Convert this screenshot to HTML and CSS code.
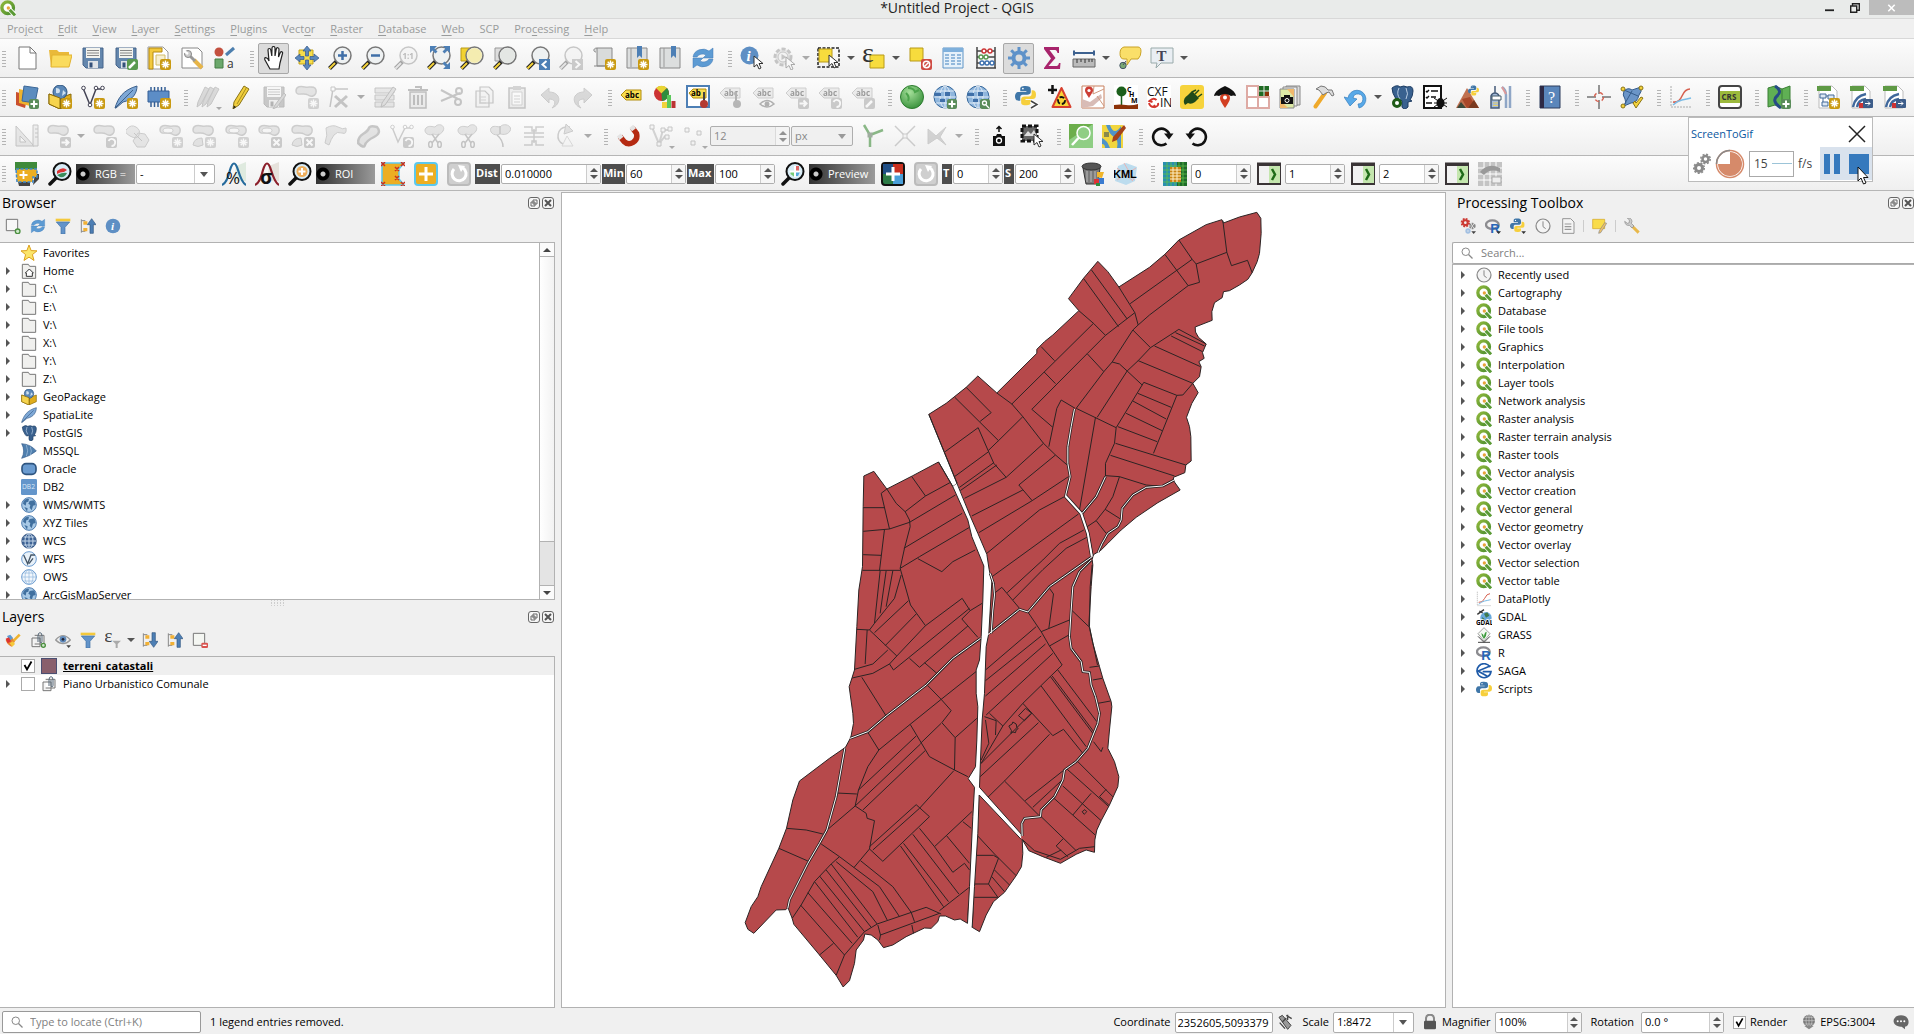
FILE: index.html
```html
<!DOCTYPE html>
<html lang="en">
<head>
<meta charset="utf-8">
<title>*Untitled Project - QGIS</title>
<link rel="stylesheet" href="styles.css">
</head>
<body>
<svg class="paints" aria-hidden="true">
<linearGradient id="qg" x1="0" y1="0" x2="1" y2="1"><stop offset="0" stop-color="#8fb73c"/><stop offset="1" stop-color="#4b8f2e"/></linearGradient>
<radialGradient id="gg" cx=".4" cy=".3" r=".8"><stop offset="0" stop-color="#a5e09a"/><stop offset="1" stop-color="#2f8a33"/></radialGradient>
</svg>
<svg class="defs" aria-hidden="true">
<defs>
<g id="bstar"><rect x="13" y="13" width="11" height="11" rx="2" fill="#c99a12"/><path d="M18.500 14.500v8M14.500 18.500h8M15.700 15.700l5.600 5.600M21.300 15.700l-5.600 5.600" stroke="#fff" stroke-width="1.400"/></g>
<g id="bplus"><rect x="14" y="14" width="10" height="10" rx="2" fill="#5a8c5a"/><path d="M19 15.500v7M15.500 19h7" stroke="#fff" stroke-width="2"/></g>
<g id="bx"><rect x="13" y="13" width="11" height="11" rx="2" fill="#888"/><path d="M15.500 15.500l6 6M21.500 15.500l-6 6" stroke="#fff" stroke-width="2"/></g>
<g id="barr"><rect x="13" y="13" width="11" height="11" rx="2" fill="#888"/><path d="M14.500 18.500h7M18.500 15.500l3 3-3 3" stroke="#fff" stroke-width="2" fill="none"/></g>
<g id="brot"><rect x="13" y="13" width="11" height="11" rx="2" fill="#888"/><path d="M15.500 17a3.500 3.500 0 1 1 3 5" stroke="#fff" stroke-width="1.800" fill="none"/></g>
<g id="bpen"><rect x="13" y="13" width="11" height="11" rx="2" fill="#5a9a50"/><path d="M15 22l6-6" stroke="#fff" stroke-width="2.500"/></g>
<g id="mag"><path d="M10 14L1.500 22.500" stroke="#222" stroke-width="4"/><path d="M7 17L1.500 22.500" stroke="#f5d33a" stroke-width="2"/><circle cx="14.500" cy="9.500" r="8.500" fill="#eef1f2" stroke="#777" stroke-width="1.500"/></g>
<g id="cur"><path d="M0 0v11l3-2.500 2 4.500 2-1-2-4.500h4z" fill="#fff" stroke="#333"/></g>
<g id="blob"><path d="M1 6c0-5 5-5 9-4s10-2 11 3-4 8-8 5-12 2-12-4z" fill="#c4c4c4" stroke="#888" stroke-width="1.500"/></g>
<g id="sciss"><path d="M12 3c4-5 11-1 8 4s-8 4-9 3c-7 3-11-3-8-6s7-1 9-1z" fill="#c4c4c4" stroke="#888"/><path d="M9 10l6 9M16 10L9 19" stroke="#777" stroke-width="1.500"/><ellipse cx="7.500" cy="20.500" rx="1.800" ry="3" fill="none" stroke="#777" stroke-width="1.500"/><ellipse cx="16.500" cy="20.500" rx="1.800" ry="3" fill="none" stroke="#777" stroke-width="1.500"/></g>
<g id="lab"><path d="M1 8l5-5h15v10H6z" fill="#f8dd4e" stroke="#b28d0e"/><text x="5" y="11" font-size="8" font-weight="700">abc</text></g>
<g id="globeg"><circle cx="12" cy="12" r="11" fill="#8fb6dd" stroke="#35679b"/><ellipse cx="12" cy="12" rx="5" ry="11" fill="none" stroke="#dfeaf5"/><path d="M12 1v22M1 12h22M3 6h18M3 18h18" stroke="#dfeaf5" fill="none"/><path d="M2 8h6v3H2zM12 7h5v4h-5zM7 14h5v3H7z" fill="#3f6fa8"/></g>
<g id="lens"><path d="M9 15L2 22" stroke="#111" stroke-width="3.500" stroke-linecap="round"/><circle cx="14" cy="9.500" r="8.500" fill="#d8ecf6" stroke="#111" stroke-width="2"/></g>
</defs>
<symbol id="q" viewBox="0 0 24 24"><circle cx="11.500" cy="11.500" r="8.700" fill="#fff" stroke="url(#qg)" stroke-width="5"/><path d="M13 13l9 9" stroke="#fff" stroke-width="7"/><path d="M14.500 14.500l8 8.500" stroke="#5a9a35" stroke-width="4.500"/><circle cx="12.500" cy="12" r="2.500" fill="#e7a33a"/></symbol>
<symbol id="new" viewBox="0 0 24 24"><path d="M4 1h11l6 6v16H4z" fill="#fff" stroke="#777"/><path d="M15 1v6h6" fill="none" stroke="#777"/></symbol>
<symbol id="open" viewBox="0 0 24 24"><path d="M1 4h8l2 2h10v15H3z" fill="#e9b93a"/><path d="M4 9h20l-3 12H3z" fill="#fadb5e" stroke="#e2b22e"/></symbol>
<symbol id="save" viewBox="0 0 24 24"><path d="M2 2h20v20H5l-3-3z" fill="#6386ad" stroke="#47648a"/><path d="M5 2h14v10H5z" fill="#f3f3ee"/><path d="M6 4.500h12M6 7h12M6 9.500h12" stroke="#888"/><path d="M7 15h10v7H7z" fill="#dfe3e8"/><path d="M8.500 16.500h3v5h-3z" fill="#33507a"/></symbol>
<symbol id="saveas" viewBox="0 0 24 24"><use href="#save"/><use href="#bpen"/></symbol>
<symbol id="lay" viewBox="0 0 24 24"><path d="M1 1h15l5 5v17H1z" fill="#fff" stroke="#999"/><path d="M2 2h13v4H6v17H2z" fill="#f3c93c" stroke="#b58a10"/><path d="M9 9h9v10H9z" fill="#f7efcf" stroke="#d2bd6a"/><use href="#bstar"/></symbol>
<symbol id="laym" viewBox="0 0 24 24"><path d="M2 2h16l4 4v16H2z" fill="#fff" stroke="#888"/><path d="M14 14l8 8" stroke="#e7b548" stroke-width="4"/><path d="M7 7l8 8" stroke="#999" stroke-width="3"/><circle cx="8" cy="8" r="3.500" fill="#ccc" stroke="#888"/><path d="M8 8L4 5" stroke="#fff" stroke-width="2.500"/></symbol>
<symbol id="style" viewBox="0 0 24 24"><circle cx="6" cy="6" r="4.500" fill="#c3503f"/><path d="M13 9l8-7" stroke="#4d7fae" stroke-width="3"/><path d="M2 13h8v9H2z" fill="#6ca86c" stroke="#457c45"/><text x="14" y="22" font-size="12" fill="#333">a</text></symbol>
<symbol id="hand" viewBox="0 0 24 24"><path d="M8 23L3 14c-1-3 1-3 3-1l1 2L6 4c0-2 2.500-2 2.800 0l1 6L10 2c.3-2 2.700-2 3 0v8l1.300-7c.5-2 2.700-1.500 2.700.5L16.500 11l1.800-4.500c1-1.500 2.700-.5 2.200 1L18 17l-1 6z" fill="#fff" stroke="#222" stroke-width="1.200"/></symbol>
<symbol id="pan" viewBox="0 0 24 24"><path d="M4 4h14v14H4z" fill="#f6dd4a" stroke="#c2a21b"/><path d="M12 0l4 5h-2.500v5h-3V5H8zM12 24l4-5h-2.500v-5h-3v5H8zM0 12l5-4v2.500h4v3H5V16zM24 12l-5-4v2.500h-4v3h4V16z" fill="#5b88bd" stroke="#34588a" stroke-width=".7"/></symbol>
<symbol id="zin" viewBox="0 0 24 24"><use href="#mag"/><path d="M14.500 5v9M10 9.500h9" stroke="#3f6fa8" stroke-width="2.500"/></symbol>
<symbol id="zout" viewBox="0 0 24 24"><use href="#mag"/><path d="M10 9.500h9" stroke="#3f6fa8" stroke-width="2.500"/></symbol>
<symbol id="z11" viewBox="0 0 24 24"><use href="#mag"/><text x="8.500" y="12.500" font-size="8" font-weight="700" fill="#555">1:1</text></symbol>
<symbol id="zfull" viewBox="0 0 24 24"><use href="#mag"/><path d="M3 0h7L7.500 2.500l3 3-2 2-3-3L3 7zM23 0v7l-2.500-2.500-3 3-2-2 3-3L16 0zM23 23h-7l2.500-2.500-3-3 2-2 3 3L23 16z" fill="#4d7fb5"/></symbol>
<symbol id="zsel" viewBox="0 0 24 24"><path d="M1 2h13v13H1z" fill="#f2d230" stroke="#b89a18"/><use href="#mag"/><circle cx="14.500" cy="9.500" r="7.500" fill="#f4ecb0"/></symbol>
<symbol id="zlay" viewBox="0 0 24 24"><path d="M2 2h12v13H2z" fill="#ddd" stroke="#999"/><use href="#mag"/><circle cx="14.500" cy="9.500" r="7.500" fill="#e4e7e4"/></symbol>
<symbol id="zlast" viewBox="0 0 24 24"><use href="#mag"/><path d="M13 13h11v11H13z" fill="#4d7fb5"/><path d="M20.500 15l-4 3.500 4 3.500" fill="none" stroke="#fff" stroke-width="2"/></symbol>
<symbol id="znext" viewBox="0 0 24 24"><use href="#mag"/><path d="M13 13h11v11H13z" fill="#888"/><path d="M16.500 15l4 3.500-4 3.500" fill="none" stroke="#fff" stroke-width="2"/></symbol>
<symbol id="nmap" viewBox="0 0 24 24"><path d="M5 2h15v18H5zM5 2c-4 0-4 4-1 4M2 20h13" fill="#d9dbdb" stroke="#888"/><use href="#bstar"/></symbol>
<symbol id="bmn" viewBox="0 0 24 24"><path d="M2 2h20v20H2z" fill="#dcdede" stroke="#888"/><path d="M6 2v19" stroke="#999"/><path d="M12 0h5v12l-2.500-2.500L12 12z" fill="#4d7fb5"/><use href="#bstar"/></symbol>
<symbol id="bm" viewBox="0 0 24 24"><path d="M2 2h20v20H2z" fill="#dcdede" stroke="#888"/><path d="M6 2v19" stroke="#999"/><path d="M13 0h5v12l-2.500-2.500L13 12z" fill="#4d7fb5"/></symbol>
<symbol id="ref" viewBox="0 0 24 24"><path d="M2 11a10 9 0 0 1 16-6l4-3v10H12l3-3a6 5 0 0 0-9 2zM22 13a10 9 0 0 1-16 6l-4 3V12h10l-3 3a6 5 0 0 0 9-2z" fill="#5d9bd3" stroke="#4179b5" stroke-width=".5"/></symbol>
<symbol id="ident" viewBox="0 0 24 24"><circle cx="9.500" cy="9.500" r="9" fill="#5e8fc4"/><text x="6.500" y="15" font-size="15" font-style="italic" font-weight="700" font-family="Liberation Serif" fill="#fff">i</text><use href="#cur" x="14" y="10"/></symbol>
<symbol id="act" viewBox="0 0 24 24"><circle cx="11" cy="11" r="8" fill="#ccc" stroke="#777" stroke-width="3" stroke-dasharray="4 2"/><circle cx="11" cy="11" r="5" fill="#eee" stroke="#777"/><path d="M9.500 8l5 3-5 3z" fill="#777"/><use href="#cur" x="14" y="11"/></symbol>
<symbol id="sel" viewBox="0 0 24 24"><path d="M1 2h21v19H1z" fill="none" stroke="#222" stroke-width="1.500" stroke-dasharray="3 1.500"/><path d="M2 3h13v13H2z" fill="#f7dc3d" stroke="#b89a18"/><use href="#cur" x="12" y="9"/></symbol>
<symbol id="eps" viewBox="0 0 24 24"><path d="M8 9h14v13H8z" fill="#f7dc3d" stroke="#b89a18"/><text x="0" y="16" font-size="28" font-family="Liberation Serif" fill="#333">ε</text></symbol>
<symbol id="desel" viewBox="0 0 24 24"><path d="M2 2h13v13H2z" fill="#f7dc3d" stroke="#b89a18"/><rect x="13" y="13" width="11" height="11" rx="2" fill="#cf4b43"/><circle cx="18.500" cy="18.500" r="3.200" fill="none" stroke="#fff" stroke-width="1.500"/><path d="M16.500 20.500l4-4" stroke="#fff" stroke-width="1.500"/></symbol>
<symbol id="tab" viewBox="0 0 24 24"><path d="M2 2h20v20H2z" fill="#e6f1fa" stroke="#5e94c6"/><path d="M2 2h20v4H2z" fill="#7fb0dc"/><path d="M4 9h4M10 9h4M16 9h4M4 12h4M10 12h4M16 12h4M4 15h4M10 15h4M16 15h4M4 18h4M10 18h4M16 18h4" stroke="#78a7d2" stroke-width="1.500"/></symbol>
<symbol id="aba" viewBox="0 0 24 24"><path d="M3 1v21M21 1v21M2 22h20M3 5h18M3 11h18M3 17h18" stroke="#444" stroke-width="1.500"/><g fill="#fff" stroke-width="1.400"><g stroke="#c33"><circle cx="10" cy="5" r="2"/><circle cx="16" cy="5" r="2"/></g><g stroke="#5a9a50"><circle cx="7" cy="11" r="2"/><circle cx="12" cy="11" r="2"/></g><g stroke="#3f72b0"><circle cx="8" cy="17" r="2"/><circle cx="13" cy="17" r="2"/><circle cx="18" cy="17" r="2"/></g></g></symbol>
<symbol id="gear" viewBox="0 0 24 24"><circle cx="12" cy="12" r="5.500" fill="none" stroke="#5f92c9" stroke-width="4"/><path d="M12 1v5M12 18v5M1 12h5M18 12h5M4.200 4.200l3.500 3.500M16.300 16.300l3.500 3.500M19.800 4.200l-3.500 3.500M7.700 16.300l-3.500 3.500" stroke="#5f92c9" stroke-width="3"/></symbol>
<symbol id="sig" viewBox="0 0 24 24"><path d="M4 1h15v6h-1.500C17 4.500 16 4 14 4H9.500l6 8-7 8h7c2 0 3-.5 3.500-3H20.500L20 23H4v-1l7-9.500L4 3z" fill="#a8246c"/></symbol>
<symbol id="meas" viewBox="0 0 24 24"><path d="M2 7h20M2 4.500v5M22 4.500v5" stroke="#3d618f" stroke-width="2"/><path d="M1 13h22v8H1z" fill="#bbb" stroke="#666"/><path d="M5 13v4M9 13v3M13 13v4M17 13v3M20 13v3" stroke="#333"/></symbol>
<symbol id="tip" viewBox="0 0 24 24"><path d="M6 1h14q3 0 3 4.500T20 13h-7l-4 6v-6H6q-4 0-4-5.500T6 1z" fill="#fadf69" stroke="#c9a227"/><circle cx="5" cy="19.500" r="3.200" fill="#79a874" stroke="#456"/><path d="M5 19l3-4" stroke="#456"/></symbol>
<symbol id="tann" viewBox="0 0 24 24"><path d="M1 2h22v15H11l-5 5 1-5H1z" fill="#e9eef3" stroke="#9aa"/><text x="6.500" y="14.500" font-size="15" font-weight="700" font-family="Liberation Serif" fill="#445">T</text></symbol>
<symbol id="dsm" viewBox="0 0 24 24"><path d="M1 7l12 3-3 13-9-3z" fill="#c9502e"/><path d="M4 4l13 3-2 14-11-3z" fill="#efb32e"/><path d="M9 1l14 2-3 15-13-2z" fill="#5b8cbe" stroke="#3c6797"/><use href="#bplus"/></symbol>
<symbol id="gpk" viewBox="0 0 24 24"><path d="M1 9l11 4v11L1 19zM12 13l11-4v10l-11 5z" fill="#e0ad1d" stroke="#8a6a08"/><circle cx="12" cy="7" r="7" fill="#5b88b8" stroke="#2d537d"/><path d="M8 3q4 0 4 3t-4 2zM15 5l3 3-4 3z" fill="#cfe0ef"/><path d="M1 9l11 4v11L1 19z" fill="#f6d44f" stroke="#8a6a08"/></symbol>
<symbol id="gpkn" viewBox="0 0 24 24"><use href="#gpk"/><use href="#bstar"/></symbol>
<symbol id="shp" viewBox="0 0 24 24"><path d="M2 3l7 17L15 4h7" fill="none" stroke="#445" stroke-width="1.500"/><g fill="#fff" stroke="#445"><circle cx="2.500" cy="3" r="1.800"/><circle cx="15" cy="3" r="1.800"/><circle cx="21.500" cy="3" r="1.800"/><circle cx="9" cy="20" r="1.800"/></g><use href="#bstar"/></symbol>
<symbol id="fea" viewBox="0 0 24 24"><path d="M1 23C4 13 9 5 23 1c0 7-4 14-14 16L2 23z" fill="#7ea8d6" stroke="#3c608c"/><path d="M1 23L19 5" stroke="#3c608c"/></symbol>
<symbol id="fean" viewBox="0 0 24 24"><use href="#fea"/><use href="#bstar"/></symbol>
<symbol id="mem" viewBox="0 0 24 24"><path d="M4 2v20M7.500 2v20M11 2v20M14.500 2v20M18 2v20" stroke="#345f95" stroke-width="1.500"/><path d="M1 6h21v11H1z" fill="#5c8dc6" stroke="#345f95"/><use href="#bstar"/></symbol>
<symbol id="pens" viewBox="0 0 24 24"><path d="M9 2l4 2L5 19l-4 3 1-5zM14 2l4 2-8 15-4 3 1-5zM19 2l4 2-8 15-4 3 1-5z" fill="#aaa" stroke="#777"/></symbol>
<symbol id="pen" viewBox="0 0 24 24"><path d="M15 1l5 3-10 16-6 4 1-7z" fill="#f1ce3d" stroke="#8a7416"/><path d="M17.500 2.500L8 19" stroke="#a88f1e"/><path d="M4 24l1-3.500 2 1.500z" fill="#222"/></symbol>
<symbol id="sed" viewBox="0 0 24 24"><use href="#save"/><path d="M22 8l-9 12-2 4 4-2 9-12z" fill="#aaa" stroke="#666"/></symbol>
<symbol id="addp" viewBox="0 0 24 24"><use href="#blob"/><use href="#bstar"/></symbol>
<symbol id="vtx" viewBox="0 0 24 24"><path d="M3 22L6 4h15" fill="none" stroke="#777" stroke-width="1.500"/><path d="M4 2h4v4H4z" fill="#fff" stroke="#777"/><path d="M8 11l12 11M20 11L8 22" stroke="#777" stroke-width="3"/></symbol>
<symbol id="matt" viewBox="0 0 24 24"><path d="M2 3h19v5H2zM2 10h19v5H2zM2 17h19v5H2z" fill="#ccc" stroke="#777"/><path d="M20 2L9 18l-1 4 4-2L23 4z" fill="#bbb" stroke="#666"/></symbol>
<symbol id="trash" viewBox="0 0 24 24"><path d="M4 7h16v16H4z" fill="#ddd" stroke="#666" stroke-width="1.500"/><path d="M2 5h20M9 2h6v3M8 10v10M12 10v10M16 10v10" stroke="#666" stroke-width="2" fill="none"/></symbol>
<symbol id="cut" viewBox="0 0 24 24"><path d="M2 5l17 9M2 16l19-8" stroke="#777" stroke-width="2"/><circle cx="19" cy="17" r="3" fill="none" stroke="#777" stroke-width="2"/><circle cx="20" cy="6" r="3" fill="none" stroke="#777" stroke-width="2"/></symbol>
<symbol id="copy" viewBox="0 0 24 24"><path d="M8 2h9l4 4v12H8zM4 6h9l4 4v12H4z" fill="#eee" stroke="#777" stroke-width="1.200"/><path d="M7 12h7M7 15h7M7 18h7" stroke="#999"/></symbol>
<symbol id="paste" viewBox="0 0 24 24"><path d="M4 3h16v20H4z" fill="#ddd" stroke="#777" stroke-width="1.500"/><path d="M7 7h10v13H7z" fill="#fff" stroke="#999"/><path d="M8 1h8v4H8z" fill="#999"/><path d="M9 11h6M9 14h6M9 17h6" stroke="#999"/></symbol>
<symbol id="undo" viewBox="0 0 24 24"><path d="M3 10l8-7v4c12 0 13 12 3 16 5-5 3-9-3-9v4z" fill="#aaa" stroke="#888"/></symbol>
<symbol id="redo" viewBox="0 0 24 24"><path d="M21 10l-8-7v4C1 7 0 19 10 23c-5-5-3-9 3-9v4z" fill="#aaa" stroke="#888"/></symbol>
<symbol id="lab1" viewBox="0 0 24 24"><use href="#lab" y="2"/></symbol>
<symbol id="dia" viewBox="0 0 24 24"><circle cx="8.500" cy="8.500" r="7.500" fill="#c33"/><path d="M8.500 8.500L3 3A8 8 0 0 1 14 3z" fill="#e8d533"/><path d="M8.500 8.500L14 3a8 8 0 0 1-5 13z" fill="#2f8d3d"/><path d="M9 17h5v6H9z" fill="#f1d23c"/><path d="M14 10h4v13h-4z" fill="#5cc85c"/><path d="M18.500 16h4v7h-4z" fill="#b33"/></symbol>
<symbol id="labp" viewBox="0 0 24 24"><path d="M1 1h22v21H1z" fill="#fff" stroke="#4d7fb5" stroke-width="2"/><path d="M3 8l4-4h13v9H7z" fill="#f8dd4e" stroke="#b28d0e"/><text x="5" y="11" font-size="8" font-weight="700">ab</text><path d="M18 7v9" stroke="#444" stroke-width="2"/><circle cx="18" cy="19" r="4" fill="#b33a32"/></symbol>
<symbol id="lpin" viewBox="0 0 24 24"><use href="#lab"/><path d="M17 7v9" stroke="#444" stroke-width="2"/><circle cx="18" cy="19" r="4" fill="#555"/></symbol>
<symbol id="leye" viewBox="0 0 24 24"><use href="#lab"/><path d="M8 19q7-7 14 0-7 6-14 0z" fill="#fff" stroke="#444" stroke-width="1.500"/><circle cx="15" cy="19" r="2.500" fill="#444"/></symbol>
<symbol id="larr" viewBox="0 0 24 24"><use href="#lab"/><use href="#barr"/></symbol>
<symbol id="lrot" viewBox="0 0 24 24"><use href="#lab"/><use href="#brot"/></symbol>
<symbol id="lpen" viewBox="0 0 24 24"><use href="#lab"/><use href="#bpen"/></symbol>
<symbol id="gball" viewBox="0 0 24 24"><circle cx="12" cy="12" r="11.500" fill="url(#gg)" stroke="#2c7c2f"/><path d="M8 3q6 0 7 4l4-2M6 8q4 4 2 8" stroke="#4ba34b" fill="none" stroke-width="2"/></symbol>
<symbol id="gadd" viewBox="0 0 24 24"><use href="#globeg"/><use href="#bplus"/></symbol>
<symbol id="gsea" viewBox="0 0 24 24"><use href="#globeg"/><rect x="14" y="14" width="10" height="10" rx="2" fill="#5a8c5a"/><circle cx="18.500" cy="18" r="2" fill="none" stroke="#fff" stroke-width="1.300"/><path d="M20 20l3 3" stroke="#fff" stroke-width="1.300"/></symbol>
<symbol id="py" viewBox="0 0 24 24"><path d="M12 1c-5 0-6 1-6 4v2h7v1H4c-3 0-4 3-4 5s1 5 4 5h2v-4c0-2 1-3 3-3h5c2 0 4-1 4-3V5c0-3-2-4-6-4z" fill="#3f76a8"/><path d="M12 23c5 0 6-1 6-4v-2h-6v-1h8c3 0 4-2 4-5s-1-5-4-5h-1v4c0 2-1 3-3 3h-5c-2 0-4 1-4 3v3c0 3 1 4 5 4z" fill="#f6cf3c"/><circle cx="9" cy="4" r="1" fill="#fff"/></symbol>
<symbol id="pyc" viewBox="0 0 24 24"><use href="#py" width="21" height="21"/><path d="M16 16l6 3.500-6 3.500" stroke="#fff" stroke-width="4" fill="none"/><path d="M16 16l6 3.500-6 3.500" stroke="#444" stroke-width="1.500" fill="none"/></symbol>
<symbol id="warn" viewBox="0 0 24 24"><path d="M13.500 3l9 19h-18z" fill="#f9d438" stroke="#d8402e" stroke-width="2" stroke-linejoin="round"/><path d="M0 5h9M4.500 0v9" stroke="#111" stroke-width="2.500"/><circle cx="13.500" cy="15.500" r="3.500" fill="none" stroke="#111" stroke-width="1.800" stroke-dasharray="5 2"/></symbol>
<symbol id="pinm" viewBox="0 0 24 24"><path d="M1 1h22v22H1z" fill="#fff" stroke="#c9805f"/><path d="M1 14l8 3 11-8 1 4-9 8-11 2z" fill="#d8bcb6"/><path d="M13 1l-1 8 11-5M16 11l7 10" stroke="#cf9a80" fill="none"/><path d="M8 13C5 8 4 7 4 5.500a4 4 0 0 1 8 0C12 7 11 8 8 13z" fill="#cc3d35"/><circle cx="8" cy="5.500" r="1.600" fill="#fff"/></symbol>
<symbol id="chm" viewBox="0 0 24 24"><path d="M0 0h24v24H0z" fill="#fff"/><circle cx="7.500" cy="6.500" r="5" fill="#1b5f1b"/><path d="M7.500 9v12" stroke="#1b5f1b" stroke-width="1.500"/><path d="M0 20q6-1 12 0t12-1v5H0z" fill="#8c3208"/><text x="13" y="7" font-size="7" font-weight="700">C</text><text x="15" y="12" font-size="7" font-weight="700">H</text><text x="17" y="18" font-size="7" font-weight="700">M</text></symbol>
<symbol id="cxf" viewBox="0 0 24 24"><path d="M0 0h24v24H0z" fill="#fff"/><text x="0" y="11" font-size="12" fill="#111">CXF</text><text x="13" y="22" font-size="12" fill="#111">IN</text><path d="M9.500 15q-3-3-7 1l3 1M2 18q1 4 5 4M11 18q1 3-3 4l-1-2" stroke="#d4352c" stroke-width="2" fill="none"/></symbol>
<symbol id="plug" viewBox="0 0 24 24"><rect width="24" height="24" rx="3" fill="#f6d33c"/><path d="M4 18q-1-5 4-8l4-4 7 7-4 4q-4 3-7 1l-3 2z" fill="#1f4a1a"/><path d="M12 7l4-2M18 12l4-3M15 9l4-4" stroke="#1f4a1a" stroke-width="1.500"/></symbol>
<symbol id="pind" viewBox="0 0 24 24"><path d="M12 23C8 17 7 15 7 13a5 5 0 0 1 10 0c0 2-1 4-5 10z" fill="#d23f22"/><circle cx="12" cy="12.500" r="2" fill="#fff"/><path d="M1 11q1-5 7-8l4-2 4 2q6 3 7 8-3-1-5 0-6-4-12 0-2-1-5 0z" fill="#111"/></symbol>
<symbol id="grid4" viewBox="0 0 24 24"><path d="M1 1h11v11H1zM12 12h11v11H12zM1 12h11v11H1z" fill="#fff" stroke="#deaaa4" stroke-width="2"/><path d="M13 1h10v10H13z" fill="#1f6b23"/><path d="M19 6.500h4V11h-4z" fill="#8c3208"/><path d="M13 6h10M18 1v10" stroke="#e8e8e8"/></symbol>
<symbol id="maps" viewBox="0 0 24 24"><path d="M7 1h14v19H7z" fill="#ddd" stroke="#888"/><path d="M4 2h14v19H4z" fill="#eee" stroke="#888"/><path d="M1 4h14v19H1z" fill="#dce9a6" stroke="#888"/><path d="M1 15l8 8H1zM8 4l7 8V4z" fill="#f1b86b"/><path d="M2 12h12v7H2zM5 10h6v3H5z" fill="#111"/><circle cx="8" cy="15.500" r="2" fill="none" stroke="#fff"/></symbol>
<symbol id="ham" viewBox="0 0 24 24"><path d="M3.500 21.500L13 8" stroke="#efa92a" stroke-width="4" stroke-linecap="round"/><path d="M4 4l5-3q5 0 7 4l4 0 2 5-2 1-3-4-3 1-3 2-4-5z" fill="#ddd" stroke="#777"/></symbol>
<symbol id="bundo" viewBox="0 0 24 24"><path d="M0 12l4 1a9 9 0 1 1 11 10l-1-4a5 5 0 1 0-5-6l4 1-7 7z" fill="#58a9e8" stroke="#347dbd" stroke-width=".7"/></symbol>
<symbol id="ele" viewBox="0 0 24 24"><path d="M2 3q5-4 8-1 4-2 7 0 6-2 6 4 0 5-3 9l2 1-4 1v5q-4 4-6 0v-6q-1-2-1 0-3 2-5-2Q2 8 2 3z" fill="#39618f" stroke="#1d3c62"/><path d="M9 3q-3 6 1 11M16 3q3 6 0 11" stroke="#b9cde4" fill="none"/></symbol>
<symbol id="eleg" viewBox="0 0 24 24"><use href="#ele"/><circle cx="7" cy="18" r="3.500" fill="#fff" stroke="#1f5b17" stroke-width="3"/></symbol>
<symbol id="bug" viewBox="0 0 24 24"><path d="M1 1h17v22H1z" fill="#fff" stroke="#111" stroke-width="2"/><path d="M3 6l1 1 2-2M3 12l1 1 2-2M8 6h7M8 12h5M3 18h6" stroke="#111" stroke-width="1.500" fill="none"/><ellipse cx="17.500" cy="18" rx="4" ry="5" fill="#111"/><path d="M11 13l13 9M24 13l-13 9M11 18h13" stroke="#111"/></symbol>
<symbol id="mtn" viewBox="0 0 24 24"><path d="M0 23L11 3l12 20z" fill="#c0704f"/><path d="M6 14l8-2 5 8-8 3z" fill="#a9482a"/><path d="M1 23l4-6 5 6z" fill="#3c4a3a"/><path d="M12 23l6-8 5 8z" fill="#7a3a20"/><use href="#py" x="12" y="0" width="11" height="11"/></symbol>
<symbol id="bend" viewBox="0 0 24 24"><path d="M2 23V11q1-3 4-3t4 3v12zM6 8V1" fill="#a5bcdb" stroke="#445a78" stroke-width="1.500"/><path d="M3 11h9v4H3z" fill="#fff" stroke="#445a68"/><path d="M4 18h5M4 20.500h5" stroke="#e8d060"/><path d="M13 2q4 3 4 8v13M21 1v22" stroke="#8fa6c6" stroke-width="2.500" fill="none"/><path d="M13 2l4 7" stroke="#d99" stroke-width="2"/></symbol>
<symbol id="help" viewBox="0 0 24 24"><path d="M2 1h20v22H2z" fill="#5a86bb" stroke="#2c3c5c"/><path d="M2 1h4v22H2z" fill="#2e2a45"/><text x="10" y="18" font-size="16" font-family="Liberation Serif" fill="#fff">?</text></symbol>
<symbol id="cross" viewBox="0 0 24 24"><path d="M12 0v9M12 15v9M0 12h9M15 12h9" stroke="#333"/><circle cx="12" cy="12" r="4.500" fill="none" stroke="#d6604f" stroke-width="1.500" stroke-dasharray="4 3"/></symbol>
<symbol id="chk" viewBox="0 0 24 24"><path d="M4 6q4-4 8-1l9-3q1 5-2 8-2 8-8 8l-7 3q3-3 1-7-3-4-1-8z" fill="#6b95c8" stroke="#355c8c"/><path d="M4 5l14 6M12 6L4 20" stroke="#355c8c"/><g fill="#f4d23c" stroke="#8a7416"><circle cx="3" cy="4" r="2"/><circle cx="21" cy="3" r="2"/><circle cx="3" cy="21" r="2"/><path d="M13 18l3 5 7-10-2-1-5 6-1-2z"/></g></symbol>
<symbol id="plot" viewBox="0 0 24 24"><path d="M2 1v21h21" fill="none" stroke="#aaa" stroke-dasharray="2 1"/><path d="M4 17q6 1 9-6t8-7" fill="none" stroke="#d6604f" stroke-width="1.500"/><path d="M4 20q4-4 9-5t9-2" fill="none" stroke="#7bbce6" stroke-width="1.500"/></symbol>
<symbol id="crs" viewBox="0 0 24 24"><rect x="1" y="1" width="22" height="22" rx="3" fill="#fff" stroke="#444" stroke-width="2"/><path d="M2 6h20v12H2z" fill="#9cb93c"/><text x="3.500" y="15" font-size="8" font-weight="700" fill="#333">CRS</text></symbol>
<symbol id="gmap" viewBox="0 0 24 24"><path d="M1 3l7-2 7 3 8-3v19l-8 3-7-3-7 2z" fill="#5fb054" stroke="#3b7e35"/><path d="M8 1q8 5 2 10t4 12" stroke="#264b85" stroke-width="3" fill="none"/><path d="M15 4v19" stroke="#3b7e35"/><use href="#bplus"/></symbol>
<symbol id="ogc" viewBox="0 0 24 24"><path d="M3 1h13l5 5v17H3z" fill="#fff" stroke="#bbb"/><path d="M1 1h14v5H1z" fill="#5f9a45"/><path d="M4 9h6v4H4zM12 10h6v4h-6zM6 17h6v4H6zM7 13v4M10 11h2" fill="#dce7f3" stroke="#456a98"/><use href="#bstar"/></symbol>
<symbol id="xtf" viewBox="0 0 24 24"><path d="M3 1h13l5 5v17H3z" fill="#fff" stroke="#bbb"/><path d="M1 1h14v5H1z" fill="#5f9a45"/><path d="M4 22q2-11 13-13M8 22q1-7 9-8" fill="none" stroke="#40689c" stroke-width="2.500"/><path d="M10 18h5v5h-5z" fill="#c33"/><rect x="14" y="14" width="10" height="9" rx="1" fill="#3d5d8a"/><path d="M16 18.500h5M19 16.500l2 2-2 2" stroke="#fff" fill="none"/></symbol>
<symbol id="tri" viewBox="0 0 24 24"><path d="M1 2v20h18zM5 12v6h6z" fill="#ccc" stroke="#777" fill-rule="evenodd"/><path d="M18 1h5v21h-5z" fill="#ddd" stroke="#777"/><path d="M20 5h3M20 9h3M20 13h3" stroke="#777"/></symbol>
<symbol id="mv" viewBox="0 0 24 24"><use href="#blob"/><use href="#barr"/></symbol>
<symbol id="rot" viewBox="0 0 24 24"><use href="#blob"/><use href="#brot"/></symbol>
<symbol id="simp" viewBox="0 0 24 24"><path d="M1 5q4-5 9-2t3 8-9 1-3-7zM12 9l7 1 4 6-4 7h-8l-4-6z" fill="#ccc" stroke="#888"/><path d="M8 9l8 8" stroke="#777"/></symbol>
<symbol id="ring" viewBox="0 0 24 24"><use href="#blob"/><ellipse cx="9" cy="6.500" rx="5" ry="2.500" fill="#f3f3f3" stroke="#888"/><use href="#bstar"/></symbol>
<symbol id="part" viewBox="0 0 24 24"><use href="#blob"/><path d="M1 21q1-7 9-7l1 7q-5 3-10 0z" fill="#c4c4c4" stroke="#888"/><use href="#bstar"/></symbol>
<symbol id="dring" viewBox="0 0 24 24"><use href="#blob"/><ellipse cx="9" cy="6.500" rx="5" ry="2.500" fill="#f3f3f3" stroke="#888"/><use href="#bx"/></symbol>
<symbol id="dpart" viewBox="0 0 24 24"><use href="#blob"/><path d="M1 21q1-7 9-7l1 7q-5 3-10 0z" fill="#c4c4c4" stroke="#888"/><use href="#bx"/></symbol>
<symbol id="resh" viewBox="0 0 24 24"><path d="M2 4q7-4 12-1t8 1q1 7-4 5t-8 2-5 10l-4-2q3-8 1-15z" fill="#c4c4c4" stroke="#888"/></symbol>
<symbol id="offs" viewBox="0 0 24 24"><path d="M20 3q5 6-3 10t-9 8-7-2q0-6 5-9t6-6 8-1z" fill="#c4c4c4" stroke="#777" stroke-width="2.500"/></symbol>
<symbol id="revl" viewBox="0 0 24 24"><path d="M2 3l6 15L15 4h7" fill="none" stroke="#888" stroke-width="1.500"/><g fill="#fff" stroke="#888"><circle cx="2.500" cy="3" r="1.800"/><circle cx="15" cy="3" r="1.800"/><circle cx="21.500" cy="3" r="1.800"/></g><use href="#brot"/></symbol>
<symbol id="spl" viewBox="0 0 24 24"><use href="#sciss"/></symbol>
<symbol id="mrg" viewBox="0 0 24 24"><path d="M11 3c4-5 13-1 10 4s-9 3-10 3c-7 3-11-3-9-6s7-1 9-1z" fill="#c4c4c4" stroke="#888"/><path d="M11 2v8M8 11q6 5 6 12" stroke="#777" fill="none" stroke-width="1.500"/></symbol>
<symbol id="mrga" viewBox="0 0 24 24"><path d="M2 3h8v4h4V3h8M2 9h20M2 13h20M2 21h8v-4h4v4h8M12 5v14" stroke="#888" fill="none" stroke-width="1.500"/></symbol>
<symbol id="rsym" viewBox="0 0 24 24"><path d="M9 20A9 9 0 0 1 12 3l4 0" stroke="#888" stroke-width="1.500" fill="none"/><path d="M12 0l7 7-9 3z" fill="#bbb" stroke="#888"/><path d="M13 12l6 10H8z" fill="none" stroke="#aaa"/></symbol>
<symbol id="magn" viewBox="0 0 24 24"><path d="M4 12.500l4 5q4 4 9 1t3.500-9L16.500 4" fill="none" stroke="#b52a12" stroke-width="5.500"/><path d="M2.800 11l2.700 3.400M15.300 2.400l2.700 3.400" stroke="#e4e4e4" stroke-width="5"/></symbol>
<symbol id="snap" viewBox="0 0 24 24"><path d="M3 3l7 17L14 6h8M10 20l6-8" fill="none" stroke="#999" stroke-width="2"/><g fill="#eee" stroke="#777"><path d="M1 1h4v4H1zM12 4h4v4h-4zM19 3h4v4h-4zM16 11h4v4h-4zM8 18h4v4H8z"/></g></symbol>
<symbol id="snapv" viewBox="0 0 24 24"><g fill="#eee" stroke="#777"><path d="M3 4h4v4H3zM15 7h4v4h-4zM9 17h4v4H9z"/></g></symbol>
<symbol id="topo" viewBox="0 0 24 24"><path d="M10 23V11L4 1M10 11l13-5" stroke="#6ea86a" stroke-width="2.500" fill="none"/><path d="M7.500 8.500h5v5h-5z" fill="#8a9a8a"/></symbol>
<symbol id="xint" viewBox="0 0 24 24"><path d="M2 2l20 20M22 2L2 22" stroke="#888" stroke-width="1.500"/><path d="M10 10h4v4h-4z" fill="#eee" stroke="#888"/></symbol>
<symbol id="trac" viewBox="0 0 24 24"><path d="M3 20V5l8 7 10-9-6 10 6 8-9-7z" fill="#999" stroke="#888"/></symbol>
<symbol id="cam" viewBox="0 0 24 24"><path d="M6 12h3l1-2h4l1 2h3v10H6z" fill="#111"/><circle cx="12" cy="16.500" r="2.500" fill="none" stroke="#fff" stroke-width="1.300"/><path d="M12 8V3M9.500 5L12 2.500 14.500 5" stroke="#111" stroke-width="1.500" fill="none"/></symbol>
<symbol id="seli" viewBox="0 0 24 24"><path d="M2 2h15v15H2z" fill="#666" stroke="#111" stroke-width="3" stroke-dasharray="4 2"/><path d="M4 12l4-5 3 3 3-4 3 6z" fill="#ddd"/><use href="#cur" x="14" y="10"/></symbol>
<symbol id="gmag" viewBox="0 0 24 24"><path d="M0 0h24v24H0z" fill="#8fce84"/><path d="M0 0h24L0 16z" fill="#6cae4c"/><circle cx="14.500" cy="9" r="6.500" fill="#8fce84" stroke="#fff" stroke-width="1.500"/><path d="M9.500 14L3 21" stroke="#fff" stroke-width="2.500"/></symbol>
<symbol id="mapp" viewBox="0 0 24 24"><path d="M0 1h21v23H0z" fill="#f2d63e"/><path d="M0 14q5 2 8 10H3q0-4-3-4zM8 1q2 6 5 6t6-5v22h-4q2-8-3-11T4 1z" fill="#4f93c8"/><path d="M2 8h5v5H2z" fill="#8a8a4a"/><path d="M22 1L11 13l-1 5 5-2L24 4z" fill="#a5421a"/></symbol>
<symbol id="cw" viewBox="0 0 24 24"><path d="M15.500 19.500A8.300 8.300 0 1 1 18.500 11" fill="none" stroke="#111" stroke-width="2.600"/><path d="M13 9.500h9.500l-4.500 6z" fill="#111"/></symbol>
<symbol id="ccw" viewBox="0 0 24 24"><path d="M8.500 19.500A8.300 8.300 0 1 0 5.500 11" fill="none" stroke="#111" stroke-width="2.600"/><path d="M11 9.500H1.500l4.500 6z" fill="#111"/></symbol>
<symbol id="scp" viewBox="0 0 24 24"><path d="M0 0h22v8H0z" fill="#3f8a3a"/><path d="M3 20h12v4H4zM20 12h4v5l-6 6z" fill="#444"/><path d="M1 7h21v8h-4v5H2z" fill="#ecae22" stroke="#3f8ad0" stroke-width="1.500" stroke-dasharray="3 1.500"/><path d="M8.500 9v8M4.500 13h8" stroke="#fff" stroke-width="1.800"/></symbol>
<symbol id="lensr" viewBox="0 0 24 24"><use href="#lens"/><path d="M9 9q6-5 10-1l-3 2q-4 0-7 2z" fill="#d33"/><path d="M9 13q6-3 10-2-2 5-7 4z" fill="#3a8d5c"/></symbol>
<symbol id="lensp" viewBox="0 0 24 24"><use href="#lens"/><circle cx="14" cy="9.500" r="5.500" fill="#eeae5c"/><path d="M14 6v7M10.500 9.500h7" stroke="#fff" stroke-width="2"/></symbol>
<symbol id="lensb" viewBox="0 0 24 24"><use href="#lens"/><path d="M14 4h4v5h-4z" fill="#d66"/><path d="M9.500 10h4v5l-4-3z" fill="#7c7"/><path d="M14 10h5l-2 4h-3z" fill="#5ad"/><path d="M14 4v11M8.500 9.500h11" stroke="#fff" stroke-width="2"/></symbol>
<symbol id="pct" viewBox="0 0 24 24"><path d="M14 4l10-4v19H12z" fill="#dfeadf"/><path d="M0 23Q5 21 8 8q4-13 8 0t8 15" fill="none" stroke="#256a9c" stroke-width="2.200"/><text x="4" y="22" font-size="17" fill="#111">%</text></symbol>
<symbol id="sgm" viewBox="0 0 24 24"><path d="M14 4l10-4v19H12z" fill="#e6e2dc"/><path d="M0 23Q5 21 8 8q4-13 8 0t8 15" fill="none" stroke="#8c1f2b" stroke-width="2.200"/><text x="5" y="22" font-size="19" font-weight="700" fill="#111">σ</text></symbol>
<symbol id="roi" viewBox="0 0 24 24"><path d="M1 1h22l-5 6v10l5 6H1z" fill="#ecae22" stroke="#5bc8ee" stroke-width="1.500"/><path d="M0 0l4 4M4 0L0 4M20 0l4 4M24 0l-4 4M14 5l4 4M18 5l-4 4M14 14l4 4M18 14l-4 4M20 20l4 4M24 20l-4 4M0 20l4 4M4 20l-4 4" stroke="#c9301f" stroke-width="1.500"/></symbol>
<symbol id="yplus" viewBox="0 0 24 24"><rect x="1" y="1" width="22" height="22" rx="3" fill="#ecae22" stroke="#5bc8ee" stroke-width="2"/><path d="M12 5v14M5 12h14" stroke="#fff" stroke-width="3"/></symbol>
<symbol id="cyc" viewBox="0 0 24 24"><rect x="1" y="1" width="22" height="22" rx="3" fill="#cfcfcf" stroke="#bbb" stroke-width="2"/><path d="M7 7a7 7 0 1 0 9-1" stroke="#fff" stroke-width="3" fill="none"/><path d="M11 3l7 1-4 6z" fill="#fff"/></symbol>
<symbol id="rgb" viewBox="0 0 24 24"><rect x="1" y="1" width="22" height="22" rx="3" fill="#2b7a46" stroke="#111" stroke-width="2"/><path d="M12 2h10v10H12z" fill="#c9301f"/><path d="M12 12h10v10H12z" fill="#4a9fd8"/><path d="M2 2h10v10H2z" fill="#1f4f86"/><path d="M12 5v14M5 12h14" stroke="#fff" stroke-width="3"/></symbol>
<symbol id="bin" viewBox="0 0 24 24"><path d="M2 6h17l-2 16H5z" fill="#7a7a7a" stroke="#333"/><ellipse cx="10.500" cy="4.500" rx="9.500" ry="3.500" fill="#555" stroke="#333"/><path d="M6 9v11M10 9v11M14 9v11" stroke="#bbb"/><path d="M16 10h7l-2 6-5-1z" fill="#f0b52a"/><path d="M17 16h6v6h-5z" fill="#3a7bd0"/><path d="M13 17h5v5h-5z" fill="#d33"/><path d="M15 21h4v3h-4z" fill="#2f8d3d"/></symbol>
<symbol id="kml" viewBox="0 0 24 24"><path d="M4 4l8-3 11 4-2 14-9 4L1 19z" fill="#bcdcee"/><path d="M3 6l16 13M10 1l10 17M22 6L3 18" stroke="#e6b4b4"/><text x="-1" y="16" font-size="11" font-weight="700" font-family="Liberation Sans">KML</text></symbol>
<symbol id="mosaic" viewBox="0 0 24 24"><path d="M0 0h14v24H0z" fill="#2a8fb0"/><path d="M14 0h10v24H14z" fill="#1f6b2a"/><path d="M0 4h24M0 8h24M0 12h24M0 16h24M0 20h24M4 0v24M8 0v24M12 0v24M16 0v24M20 0v24" stroke="#5fc04a" stroke-width=".8"/><path d="M7 5h11v15H7z" fill="#c98512"/><path d="M7 8h11M7 11h11M7 14h11M7 17h11M10 5v15M14 5v15" stroke="#fff0c8"/></symbol>
<symbol id="go" viewBox="0 0 24 24"><path d="M1 3h22v19H1z" fill="#f1f1f1" stroke="#3a3436" stroke-width="2"/><path d="M12 4h11v17H12z" fill="#c4e6ae"/><path d="M15 7l3 5.500-3 5.500" fill="none" stroke="#1e6b18" stroke-width="2.500"/><path d="M0 2h24" stroke="#3a3436" stroke-width="3"/></symbol>
<symbol id="tiles" viewBox="0 0 24 24"><path d="M0 0h24v24H0z" fill="#c4c4c4"/><path d="M0 6h24M0 12h24M0 18h24M6 0v24M12 0v24M18 0v24" stroke="#fff"/><path d="M2 10q8-10 20-4v4q-10-4-16 3z" fill="#999"/><path d="M14 15h9v6h-9z" fill="#eee" stroke="#aaa"/></symbol>
<symbol id="star" viewBox="0 0 24 24"><path d="M12 0l3.200 8.400 8.800.4-6.900 5.600 2.400 8.800L12 18.200l-7.500 5 2.400-8.800L0 8.800l8.800-.4z" fill="#fbe56a" stroke="#dca01c" stroke-width="1.500"/></symbol>
<symbol id="fold" viewBox="0 0 24 24"><path d="M2 2h9l2 3h9v18H2z" fill="#f0f0ee" stroke="#777" stroke-width="1.500"/></symbol>
<symbol id="home" viewBox="0 0 24 24"><path d="M2 2h9l2 3h9v18H2z" fill="#f0f0ee" stroke="#777" stroke-width="1.500"/><path d="M8 20v-5H6.500l6-6 6 6H17v5z" fill="#fff" stroke="#333" stroke-width="1.500"/></symbol>
<symbol id="sql" viewBox="0 0 24 24"><path d="M1 1q14 1 22 11Q13 20 1 23 7 12 1 1z" fill="#4f7fae" stroke="#355c8c"/><path d="M8 3q4 9 0 17M14 6q3 6 0 12" stroke="#a9c6e3" fill="none"/></symbol>
<symbol id="ora" viewBox="0 0 24 24"><rect x="1.500" y="4" width="21" height="16" rx="6" fill="#6a9bd0" stroke="#2f5580" stroke-width="2.500"/></symbol>
<symbol id="db2" viewBox="0 0 24 24"><rect width="24" height="24" rx="2" fill="#6496cb"/><text x="1.500" y="15" font-size="10" fill="#dce9f6">DB2</text></symbol>
<symbol id="earth" viewBox="0 0 24 24"><circle cx="12" cy="12" r="11" fill="#a8c9e6" stroke="#4e7db0" stroke-width="1.500"/><path d="M4 6q4-4 8-3l-1 4-3 1-1 5-4-3zM13 6l7-1 2 7-4 1-2 7-3-4 1-4-3-2zM5 15l5 2-1 5z" fill="#41709f"/></symbol>
<symbol id="wcs" viewBox="0 0 24 24"><circle cx="12" cy="12" r="11" fill="#3f6496" stroke="#274672"/><path d="M12 1v22M1 12h22M4 6h16M4 18h16" stroke="#c3d5e8" stroke-width="1.500"/><ellipse cx="12" cy="12" rx="6" ry="11" fill="none" stroke="#c3d5e8" stroke-width="1.500"/></symbol>
<symbol id="wfs" viewBox="0 0 24 24"><circle cx="12" cy="12" r="11" fill="#e8f1f9" stroke="#6a9bd0" stroke-width="1.500"/><path d="M4 6l6 13 5-13h6M12 19l6-8" fill="none" stroke="#456" stroke-width="2"/></symbol>
<symbol id="ows" viewBox="0 0 24 24"><circle cx="12" cy="12" r="11" fill="#f2f7fc" stroke="#6a9bd0" stroke-width="1.500"/><path d="M12 1v22M1 12h22M4 6h16M4 18h16" stroke="#8fb6dd"/><ellipse cx="12" cy="12" rx="6" ry="11" fill="none" stroke="#8fb6dd"/></symbol>
<symbol id="addl" viewBox="0 0 24 24"><path d="M2 2h17v17H2z" fill="#f7f7f7" stroke="#777" stroke-width="1.500"/><circle cx="19" cy="20" r="3.500" fill="#cfe8cb" stroke="#4b8f3f" stroke-width="2"/></symbol>
<symbol id="filt" viewBox="0 0 24 24"><path d="M1 1h22v4H1z" fill="#f4c93c"/><path d="M2 6h20l-7 8v10h-6V14z" fill="#6293c9" stroke="#3f6fa5"/></symbol>
<symbol id="expa" viewBox="0 0 24 24"><path d="M2 2v20M2 4h6M2 20h6" stroke="#888" stroke-width="1.500" fill="none"/><path d="M5 5h6v5H5zM5 15h6v5H5z" fill="#f2b134"/><path d="M15 1h5v13h4l-6.500 9L11 14h4z" fill="#4d7fb5" stroke="#2f5580"/></symbol>
<symbol id="coll" viewBox="0 0 24 24"><path d="M2 2v20M2 4h6M2 20h6" stroke="#888" stroke-width="1.500" fill="none"/><path d="M5 5h6v5H5zM5 15h6v5H5z" fill="#f2b134"/><path d="M15 23h5V10h4L17.500 1 11 10h4z" fill="#4d7fb5" stroke="#2f5580"/></symbol>
<symbol id="info" viewBox="0 0 24 24"><circle cx="12" cy="12" r="11" fill="#5e8fc4"/><text x="9" y="18" font-size="17" font-style="italic" font-weight="700" font-family="Liberation Serif" fill="#fff">i</text></symbol>
<symbol id="brush" viewBox="0 0 24 24"><path d="M1 12l9-5 5 7-5 8q-7-3-9-10z" fill="#e9832e"/><path d="M3 6l5-2 4 5-5 4z" fill="#5d9bd3"/><path d="M1 10l5-2 3 6-5 3z" fill="#d33"/><path d="M7 17l5-3 3 4-4 4z" fill="#f6c93c"/><path d="M13 13l9-9" stroke="#efb32e" stroke-width="4"/></symbol>
<symbol id="grp" viewBox="0 0 24 24"><path d="M3 9v13h12V9zM7 5h14v13H7" fill="#f4f4f4" stroke="#777" stroke-width="1.500"/><path d="M12 15V6q0-5 3-5t3 5v8q0 2-1.500 2T15 14V6" fill="none" stroke="#567" stroke-width="1.500"/></symbol>
<symbol id="grpn" viewBox="0 0 24 24"><use href="#grp"/><circle cx="20" cy="20" r="3" fill="#cfe8cb" stroke="#4b8f3f" stroke-width="2"/></symbol>
<symbol id="eye" viewBox="0 0 24 24"><path d="M1 12q11-13 22 0-11 11-22 0z" fill="#eee" stroke="#999" stroke-width="2"/><circle cx="12" cy="11" r="5" fill="#5e88b8"/><circle cx="12" cy="11" r="2" fill="#223"/><path d="M17 20h7l-3.500 4z" fill="#444"/></symbol>
<symbol id="epsf" viewBox="0 0 24 24"><text x="-1" y="15" font-size="29" font-family="Liberation Serif" fill="#444">ε</text><path d="M11 13h13l-5 5v6h-3v-6z" fill="#aaa"/></symbol>
<symbol id="reml" viewBox="0 0 24 24"><path d="M2 2h17v18H2z" fill="#f4f6f2" stroke="#777" stroke-width="1.500"/><rect x="14" y="16" width="10" height="8" rx="2" fill="#d9534f"/><path d="M16 20h6" stroke="#fff" stroke-width="2"/></symbol>
<symbol id="gears" viewBox="0 0 24 24"><circle cx="8" cy="7" r="5" fill="none" stroke="#cc3b35" stroke-width="4" stroke-dasharray="2.500 1.400"/><circle cx="8" cy="7" r="3.500" fill="none" stroke="#cc3b35" stroke-width="3"/><circle cx="18.500" cy="12" r="3" fill="none" stroke="#888" stroke-width="4" stroke-dasharray="2 1"/><circle cx="12" cy="19.500" r="2.500" fill="none" stroke="#a3c0e2" stroke-width="3"/><path d="M17 20h7l-3.500 4z" fill="#444"/></symbol>
<symbol id="r" viewBox="0 0 24 24"><ellipse cx="11" cy="10" rx="9.500" ry="6.500" fill="none" stroke="#8c8c90" stroke-width="3.500"/><text x="8" y="22" font-size="20" font-weight="700" font-family="Liberation Sans" fill="#2766b8">R</text></symbol>
<symbol id="rd" viewBox="0 0 24 24"><use href="#r"/><path d="M17 20h7l-3.500 4z" fill="#333"/></symbol>
<symbol id="pyd" viewBox="0 0 24 24"><use href="#py" width="22" height="22"/><path d="M17 20h7l-3.500 4z" fill="#333"/></symbol>
<symbol id="clock" viewBox="0 0 24 24"><circle cx="12" cy="12" r="10.500" fill="#f4f4f4" stroke="#888" stroke-width="1.800"/><path d="M12 5v8l4 3" stroke="#888" fill="none" stroke-width="1.500"/></symbol>
<symbol id="log" viewBox="0 0 24 24"><path d="M4 1h12l5 5v17H4z" fill="#f4f4f4" stroke="#888" stroke-width="1.300"/><path d="M7 9h10M7 13h10M7 17h10" stroke="#999" stroke-width="1.800"/></symbol>
<symbol id="edin" viewBox="0 0 24 24"><path d="M1 2h18v14H1z" fill="#f9dc4a" stroke="#d2a51c"/><path d="M22 8l-9 14-3 1 1-4 8-12z" fill="#efc26a" stroke="#888"/></symbol>
<symbol id="wren" viewBox="0 0 24 24"><path d="M12 12l10 10" stroke="#e8b84a" stroke-width="4.500"/><path d="M1 5l4 3 3-1V3L5 0q6-1 7 5l-1 3 4 4-3 3-4-4Q2 12 1 5z" fill="#ccc" stroke="#888"/></symbol>
<symbol id="gdal" viewBox="0 0 24 24"><circle cx="15" cy="13" r="8.500" fill="#69a9dc"/><path d="M12 7l5-2 3 5-5 3zM9 12l4 3-3 3z" fill="#3f7a4f"/><path d="M2 8l10-7M5 3l5 3" stroke="#333" stroke-width="2"/><text x="0" y="24" font-size="9.500" font-weight="700" stroke="#fff" stroke-width="2" paint-order="stroke">GDAL</text></symbol>
<symbol id="gras" viewBox="0 0 24 24"><path d="M12 1l9 9-9 11L3 10z" fill="#f4f8f2" stroke="#777"/><path d="M12 18Q8 13 8 9q4 2 4 6 0-7 4-8 0 7-4 11z" fill="#3c9a3c"/><path d="M3 14l9 9 9-9M3 23h18" fill="none" stroke="#444" stroke-width="1.500"/></symbol>
<symbol id="saga" viewBox="0 0 24 24"><path d="M21 6A10.500 10.500 0 1 0 22.500 13H10" fill="none" stroke="#1e5aa8" stroke-width="2.500"/><path d="M22 4L3 12l14 8" fill="none" stroke="#1e5aa8" stroke-width="2.500"/></symbol>
<symbol id="mouse" viewBox="0 0 24 24"><path d="M3 5l5-3 13 15-5 6z" fill="#999" stroke="#444" stroke-width="1.500"/><path d="M14 2l8 5M4 13l8 9M8 12l6-6M16 1v8" stroke="#444" stroke-width="2"/></symbol>
<symbol id="lock" viewBox="0 0 24 24"><path d="M6 11V7q0-6 6-6t6 6v4" fill="none" stroke="#888" stroke-width="3"/><rect x="3" y="10" width="18" height="13" rx="2" fill="#555"/></symbol>
<symbol id="gglobe" viewBox="0 0 24 24"><circle cx="12" cy="10" r="9" fill="#777"/><path d="M12 1v18M3 10h18M5 5h14M5 15h14" stroke="#ccc"/><ellipse cx="12" cy="10" rx="4.500" ry="9" fill="none" stroke="#ccc"/><path d="M5 18l7 5 7-5" fill="#888"/></symbol>
<symbol id="bub" viewBox="0 0 24 24"><path d="M12 2c14 0 14 16 6 17v4l-5-4C-3 20-3 2 12 2z" fill="#666"/><g fill="#fff"><circle cx="7" cy="11" r="1.500"/><circle cx="12" cy="11" r="1.500"/><circle cx="17" cy="11" r="1.500"/></g></symbol>
<symbol id="sea" viewBox="0 0 24 24"><circle cx="9.500" cy="9.500" r="7.500" fill="none" stroke="#888" stroke-width="2"/><path d="M15 15l8 8" stroke="#888" stroke-width="2.500"/></symbol>
<symbol id="flt" viewBox="0 0 12 12"><rect x=".5" y=".5" width="11" height="11" rx="2.500" fill="#f6f6f6" stroke="#666"/><path d="M5 3h4v4H5zM3 5h4v4H3z" fill="#f6f6f6" stroke="#666"/></symbol>
<symbol id="cls" viewBox="0 0 12 12"><rect x=".5" y=".5" width="11" height="11" rx="2.500" fill="#f6f6f6" stroke="#666"/><path d="M3 3l6 6M9 3L3 9" stroke="#555" stroke-width="2"/></symbol>
</svg>

<header class="titlebar">
  <svg class="logo"><use href="#q"/></svg>
  <h1>*Untitled Project - QGIS</h1>
  <div class="winbtns">
    <button aria-label="Minimize"><svg viewBox="0 0 10 10" width="9" height="10"><path d="M0 7.500h10" stroke="#222" stroke-width="2"/></svg></button>
    <button aria-label="Restore"><svg viewBox="0 0 10 10" width="10" height="10"><path d="M.7 3h6v6.300h-6zM2.500 3V.7h6.800v6.500H7" fill="none" stroke="#222" stroke-width="1.400"/></svg></button>
    <button class="close" aria-label="Close"><svg viewBox="0 0 10 10" width="9" height="8"><path d="M1 1l8 8M9 1L1 9" stroke="#fff" stroke-width="2"/></svg></button>
  </div>
</header>
<nav class="menubar">
  <button>Pro<u>j</u>ect</button><button><u>E</u>dit</button><button><u>V</u>iew</button><button><u>L</u>ayer</button><button><u>S</u>ettings</button><button><u>P</u>lugins</button><button>Vect<u>o</u>r</button><button><u>R</u>aster</button><button><u>D</u>atabase</button><button><u>W</u>eb</button><button>SCP</button><button>Pro<u>c</u>essing</button><button><u>H</u>elp</button>
</nav>

<div class="toolbar">
<i class="grip"></i><button aria-label="New"><svg><use href="#new"/></svg></button><button aria-label="Open"><svg><use href="#open"/></svg></button><button aria-label="Save"><svg><use href="#save"/></svg></button><button aria-label="Save as"><svg><use href="#saveas"/></svg></button><button aria-label="New layout"><svg><use href="#lay"/></svg></button><button aria-label="Layout manager"><svg><use href="#laym"/></svg></button><button aria-label="Style manager"><svg><use href="#style"/></svg></button>
<i class="grip"></i><button class="on" aria-label="Pan"><svg><use href="#hand"/></svg></button><button aria-label="Pan to selection"><svg><use href="#pan"/></svg></button><button aria-label="Zoom in"><svg><use href="#zin"/></svg></button><button aria-label="Zoom out"><svg><use href="#zout"/></svg></button><button class="off" aria-label="Native zoom"><svg><use href="#z11"/></svg></button><button aria-label="Zoom full"><svg><use href="#zfull"/></svg></button><button aria-label="Zoom to selection"><svg><use href="#zsel"/></svg></button><button aria-label="Zoom to layer"><svg><use href="#zlay"/></svg></button><button aria-label="Zoom last"><svg><use href="#zlast"/></svg></button><button class="off" aria-label="Zoom next"><svg><use href="#znext"/></svg></button><button aria-label="New map view"><svg><use href="#nmap"/></svg></button><button aria-label="New bookmark"><svg><use href="#bmn"/></svg></button><button aria-label="Bookmarks"><svg><use href="#bm"/></svg></button><button aria-label="Refresh"><svg><use href="#ref"/></svg></button>
<i class="grip"></i><button aria-label="Identify"><svg><use href="#ident"/></svg></button><button class="off drop" aria-label="Run action"><svg><use href="#act"/></svg></button><button class="drop" aria-label="Select"><svg><use href="#sel"/></svg></button><button class="drop" aria-label="Select by expression"><svg><use href="#eps"/></svg></button><button aria-label="Deselect"><svg><use href="#desel"/></svg></button><button aria-label="Attribute table"><svg><use href="#tab"/></svg></button><button aria-label="Field calculator"><svg><use href="#aba"/></svg></button><button class="on" aria-label="Toolbox"><svg><use href="#gear"/></svg></button><button aria-label="Statistics"><svg><use href="#sig"/></svg></button><button class="drop" aria-label="Measure"><svg><use href="#meas"/></svg></button><button aria-label="Map tips"><svg><use href="#tip"/></svg></button><button class="drop" aria-label="Text annotation"><svg><use href="#tann"/></svg></button>
</div>

<div class="toolbar">
<i class="grip"></i><button aria-label="Data sources"><svg><use href="#dsm"/></svg></button><button aria-label="New GeoPackage"><svg><use href="#gpkn"/></svg></button><button aria-label="New shapefile"><svg><use href="#shp"/></svg></button><button aria-label="New SpatiaLite"><svg><use href="#fean"/></svg></button><button aria-label="New memory layer"><svg><use href="#mem"/></svg></button>
<i class="grip"></i><button class="off mini" aria-label="Current edits"><svg><use href="#pens"/></svg></button><button aria-label="Toggle editing"><svg><use href="#pen"/></svg></button><button class="off" aria-label="Save edits"><svg><use href="#sed"/></svg></button><button class="off" aria-label="Add polygon"><svg><use href="#addp"/></svg></button><button class="off drop" aria-label="Vertex tool"><svg><use href="#vtx"/></svg></button><button class="off" aria-label="Modify attributes"><svg><use href="#matt"/></svg></button><button class="off" aria-label="Delete"><svg><use href="#trash"/></svg></button><button class="off" aria-label="Cut"><svg><use href="#cut"/></svg></button><button class="off" aria-label="Copy"><svg><use href="#copy"/></svg></button><button class="off" aria-label="Paste"><svg><use href="#paste"/></svg></button><button class="off" aria-label="Undo"><svg><use href="#undo"/></svg></button><button class="off" aria-label="Redo"><svg><use href="#redo"/></svg></button>
<i class="grip"></i><button aria-label="Labels"><svg><use href="#lab1"/></svg></button><button aria-label="Diagrams"><svg><use href="#dia"/></svg></button><button aria-label="Highlight labels"><svg><use href="#labp"/></svg></button><button class="off" aria-label="Pin labels"><svg><use href="#lpin"/></svg></button><button class="off" aria-label="Show labels"><svg><use href="#leye"/></svg></button><button class="off" aria-label="Move label"><svg><use href="#larr"/></svg></button><button class="off" aria-label="Rotate label"><svg><use href="#lrot"/></svg></button><button class="off" aria-label="Change label"><svg><use href="#lpen"/></svg></button>
<i class="grip"></i><button aria-label="Metasearch"><svg><use href="#gball"/></svg></button><button aria-label="Add web layer"><svg><use href="#gadd"/></svg></button><button aria-label="Search web layer"><svg><use href="#gsea"/></svg></button>
<i class="grip"></i><button aria-label="Python console"><svg><use href="#pyc"/></svg></button><button aria-label="Road signs"><svg><use href="#warn"/></svg></button><button aria-label="Geocoding"><svg><use href="#pinm"/></svg></button><button aria-label="Canopy height"><svg><use href="#chm"/></svg></button><button aria-label="CXF in"><svg><use href="#cxf"/></svg></button><button aria-label="Plugin reloader"><svg><use href="#plug"/></svg></button><button aria-label="Drone planner"><svg><use href="#pind"/></svg></button><button aria-label="Grid"><svg><use href="#grid4"/></svg></button><button aria-label="Map photos"><svg><use href="#maps"/></svg></button><button aria-label="Build"><svg><use href="#ham"/></svg></button><button class="drop" aria-label="Reload"><svg><use href="#bundo"/></svg></button><button aria-label="PostGIS"><svg><use href="#eleg"/></svg></button><button aria-label="Checks"><svg><use href="#bug"/></svg></button><button aria-label="Terrain"><svg><use href="#mtn"/></svg></button><button aria-label="Robot"><svg><use href="#bend"/></svg></button>
<i class="grip"></i><button aria-label="Help"><svg><use href="#help"/></svg></button>
<i class="grip"></i><button aria-label="Coordinate capture"><svg><use href="#cross"/></svg></button><button aria-label="Topology checker"><svg><use href="#chk"/></svg></button>
<i class="grip"></i><button aria-label="DataPlotly"><svg><use href="#plot"/></svg></button>
<i class="grip"></i><button aria-label="CRS"><svg><use href="#crs"/></svg></button>
<i class="grip"></i><button aria-label="OpenLayers"><svg><use href="#gmap"/></svg></button>
<i class="grip"></i><button aria-label="New OGC"><svg><use href="#ogc"/></svg></button><button aria-label="Import XTF"><svg><use href="#xtf"/></svg></button><button aria-label="Export XTF"><svg><use href="#xtf"/></svg></button>
</div>

<div class="toolbar">
<i class="grip"></i><button class="off" aria-label="Advanced digitizing"><svg><use href="#tri"/></svg></button><button class="off drop" aria-label="Move feature"><svg><use href="#mv"/></svg></button><button class="off" aria-label="Rotate feature"><svg><use href="#rot"/></svg></button><button class="off" aria-label="Simplify"><svg><use href="#simp"/></svg></button><button class="off" aria-label="Add ring"><svg><use href="#ring"/></svg></button><button class="off" aria-label="Add part"><svg><use href="#part"/></svg></button><button class="off" aria-label="Fill ring"><svg><use href="#ring"/></svg></button><button class="off" aria-label="Delete ring"><svg><use href="#dring"/></svg></button><button class="off" aria-label="Delete part"><svg><use href="#dpart"/></svg></button><button class="off" aria-label="Reshape"><svg><use href="#resh"/></svg></button><button class="off" aria-label="Offset curve"><svg><use href="#offs"/></svg></button><button class="off" aria-label="Reverse line"><svg><use href="#revl"/></svg></button><button class="off" aria-label="Split features"><svg><use href="#spl"/></svg></button><button class="off" aria-label="Split parts"><svg><use href="#spl"/></svg></button><button class="off" aria-label="Merge features"><svg><use href="#mrg"/></svg></button><button class="off" aria-label="Merge attributes"><svg><use href="#mrga"/></svg></button><button class="off drop" aria-label="Rotate symbols"><svg><use href="#rsym"/></svg></button>
<i class="grip"></i><button aria-label="Snapping"><svg><use href="#magn"/></svg></button><button class="off mini" aria-label="Snapping layers"><svg><use href="#snap"/></svg></button><button class="off mini" aria-label="Snapping type"><svg><use href="#snapv"/></svg></button>
<span class="spin dis w80"><input aria-label="Snapping tolerance" value="12" disabled><i></i></span><span class="combo dis w62"><select aria-label="Snapping unit" disabled><option>px</option></select></span>
<button class="half" aria-label="Topological editing"><svg><use href="#topo"/></svg></button><button class="off" aria-label="Snap intersection"><svg><use href="#xint"/></svg></button><button class="off drop" aria-label="Tracing"><svg><use href="#trac"/></svg></button>
<i class="grip"></i><button aria-label="Capture"><svg><use href="#cam"/></svg></button><button aria-label="Select images"><svg><use href="#seli"/></svg></button>
<i class="grip"></i><button aria-label="Zoom to feature"><svg><use href="#gmag"/></svg></button><button aria-label="OSM map"><svg><use href="#mapp"/></svg></button>
<i class="grip"></i><button aria-label="Rotate clockwise"><svg><use href="#cw"/></svg></button><button aria-label="Rotate counterclockwise"><svg><use href="#ccw"/></svg></button>
</div>

<div class="toolbar low">
<i class="grip"></i><button aria-label="SCP"><svg><use href="#scp"/></svg></button><button aria-label="Zoom to raster"><svg><use href="#lensr"/></svg></button>
<button class="pill w59">RGB =</button><span class="combo w79"><select aria-label="RGB"><option>-</option></select></span>
<button aria-label="Percent stretch"><svg><use href="#pct"/></svg></button><button aria-label="Sigma stretch"><svg><use href="#sgm"/></svg></button><button aria-label="Zoom to ROI"><svg><use href="#lensp"/></svg></button>
<button class="pill w59">ROI</button><button aria-label="ROI polygon"><svg><use href="#roi"/></svg></button><button aria-label="Activate ROI pointer"><svg><use href="#yplus"/></svg></button><button aria-label="Redo ROI"><svg><use href="#cyc"/></svg></button>
<label class="tag w25" for="dist">Dist</label><span class="spin w100"><input id="dist" value="0.010000"><i></i></span>
<label class="tag w23" for="min">Min</label><span class="spin w60"><input id="min" value="60"><i></i></span>
<label class="tag w27" for="max">Max</label><span class="spin w60"><input id="max" value="100"><i></i></span>
<button aria-label="Zoom to preview"><svg><use href="#lensb"/></svg></button><button class="pill w66">Preview</button><button aria-label="Preview pointer"><svg><use href="#rgb"/></svg></button><button aria-label="Redo preview"><svg><use href="#cyc"/></svg></button>
<label class="tag w10" for="tt">T</label><span class="spin w50"><input id="tt" value="0"><i></i></span>
<label class="tag w10" for="ss">S</label><span class="spin w60"><input id="ss" value="200"><i></i></span>
<button aria-label="Remove temporary files"><svg><use href="#bin"/></svg></button><button aria-label="Export KML"><svg><use href="#kml"/></svg></button>
<i class="grip"></i><button aria-label="Mosaic"><svg><use href="#mosaic"/></svg></button>
<span class="spin w60"><input aria-label="Band 1" value="0"><i></i></span><button aria-label="Go 1"><svg><use href="#go"/></svg></button>
<span class="spin w60"><input aria-label="Band 2" value="1"><i></i></span><button aria-label="Go 2"><svg><use href="#go"/></svg></button>
<span class="spin w60"><input aria-label="Band 3" value="2"><i></i></span><button aria-label="Go 3"><svg><use href="#go"/></svg></button>
<button aria-label="Tiles"><svg><use href="#tiles"/></svg></button>
</div>

<main>
<aside class="left">
  <section class="dock browser">
    <header><h2>Browser</h2><button aria-label="Float"><svg><use href="#flt"/></svg></button><button aria-label="Close panel"><svg><use href="#cls"/></svg></button></header>
    <div class="tools"><button aria-label="Add layer"><svg><use href="#addl"/></svg></button><button aria-label="Refresh"><svg><use href="#ref"/></svg></button><button aria-label="Filter"><svg><use href="#filt"/></svg></button><button aria-label="Collapse all"><svg><use href="#coll"/></svg></button><button aria-label="Properties"><svg><use href="#info"/></svg></button></div>
    <div class="pane">
      <ul class="tree">
        <li class="leaf"><svg><use href="#star"/></svg>Favorites</li>
        <li><svg><use href="#home"/></svg>Home</li>
        <li><svg><use href="#fold"/></svg>C:\</li>
        <li><svg><use href="#fold"/></svg>E:\</li>
        <li><svg><use href="#fold"/></svg>V:\</li>
        <li><svg><use href="#fold"/></svg>X:\</li>
        <li><svg><use href="#fold"/></svg>Y:\</li>
        <li><svg><use href="#fold"/></svg>Z:\</li>
        <li><svg><use href="#gpk"/></svg>GeoPackage</li>
        <li><svg><use href="#fea"/></svg>SpatiaLite</li>
        <li><svg><use href="#ele"/></svg>PostGIS</li>
        <li class="leaf"><svg><use href="#sql"/></svg>MSSQL</li>
        <li class="leaf"><svg><use href="#ora"/></svg>Oracle</li>
        <li class="leaf"><svg><use href="#db2"/></svg>DB2</li>
        <li><svg><use href="#earth"/></svg>WMS/WMTS</li>
        <li><svg><use href="#earth"/></svg>XYZ Tiles</li>
        <li><svg><use href="#wcs"/></svg>WCS</li>
        <li><svg><use href="#wfs"/></svg>WFS</li>
        <li><svg><use href="#ows"/></svg>OWS</li>
        <li><svg><use href="#earth"/></svg>ArcGisMapServer</li>
      </ul>
      <div class="scroll"><b class="up"></b><span></span><b class="down"></b></div>
    </div>
  </section>
  <div class="hsplit"></div>
  <section class="dock layers">
    <header><h2>Layers</h2><button aria-label="Float"><svg><use href="#flt"/></svg></button><button aria-label="Close panel"><svg><use href="#cls"/></svg></button></header>
    <div class="tools"><button aria-label="Styling"><svg><use href="#brush"/></svg></button><button aria-label="Add group"><svg><use href="#grpn"/></svg></button><button aria-label="Map themes"><svg><use href="#eye"/></svg></button><button aria-label="Filter legend"><svg><use href="#filt"/></svg></button><button class="drop" aria-label="Filter by expression"><svg><use href="#epsf"/></svg></button><button aria-label="Expand all"><svg><use href="#expa"/></svg></button><button aria-label="Collapse all"><svg><use href="#coll"/></svg></button><button aria-label="Remove layer"><svg><use href="#reml"/></svg></button></div>
    <div class="pane">
      <ul class="tree">
        <li class="leaf cur"><input type="checkbox" id="l1" checked><i class="swatch"></i><label for="l1">terreni_catastali</label></li>
        <li><input type="checkbox" id="l2"><svg><use href="#grp"/></svg><label for="l2">Piano Urbanistico Comunale</label></li>
      </ul>
    </div>
  </section>
</aside>

<section class="canvas" aria-label="Map">
<svg viewBox="563 193 882 814">
<g class="map" transform="translate(740 200) scale(.33333)">
<path class="land" d="M1552 37L1564 55 1565 100 1560 160 1553 185 1538 218 1525 238 1500 255 1470 272 1452 275 1448 293 1425 308 1417 335 1418 361 1367 381 1368 396 1377 412 1400 432 1389 458 1394 475 1378 485 1385 500 1380 530 1360 550 1376 578 1357 610 1341 652 1350 680 1354 710 1355 783 1339 795 1336 818 1302 832 1302 842 1322 870 1255 908 1190 952 1145 990 1105 1030 1085 1050 1062 1064 1058 1078 1060 1095 1055 1160 1048 1275 1060 1330 1080 1400 1090 1435 1115 1505 1117 1520 1110 1590 1105 1645 1125 1685 1138 1730 1135 1760 1110 1815 1085 1862 1072 1890 1066 1920 1065 1957 1040 1950 1010 1963 963 1990 910 1970 868 1952 848 1918 850 1960 846 2000 830 2027 795 2077 762 2105 740 2145 720 2195 698 2182 701 2120 687 2120 684 2170 662 2157 645 2160 618 2148 600 2148 595 2165 575 2185 555 2184 500 2210 460 2235 432 2243 415 2220 395 2205 376 2202 372 2220 350 2250 345 2290 330 2342 311 2361 290 2326 240 2265 163 2173 158 2155 145 2122 139 2129 110 2130 43 2200 25 2188 17 2168 35 2120 55 2090 65 2060 118 1945 141 1885 160 1800 180 1743 270 1675 318 1642 334 1612 342 1570 340 1540 329 1460 338 1432 345 1410 352 1280 358 1170 369 1100 371 920 373 828 403 814 442 867 520 827 597 786 640 860 653 850 568 643 620 610 680 562 715 528 772 579 892 460 892 448 915 425 940 405 1018 332 987 296 1032 235 1075 184 1105 215 1138 261 1230 202 1276 163 1318 120 1400 74 1447 59 1452 69 1500 51z"/>
<path transform="translate(480 0)" d="M796 163L866 257 900 247 890 192 878 178 838 120M890 192L982 157 970 62M982 157L996 197 1044 181 1058 218M692 311L878 178M866 257L750 345 716 375 706 338 658 261M576 210L683 357M552 235L657 380M538 332L582 370 618 406 706 338M582 370L337 612M618 406L563 461 397 628 460 682M425 440L465 482M434 516L468 551M563 461L613 515M716 375L700 390 638 486 613 515 530 625M700 390L753 443 716 482 683 513 593 652M638 486L660 492 683 513 728 555 733 547 832 586 850 585 880 550M753 443L838 388 920 432M828 398L915 438M815 408L909 455M765 438L903 500M716 482L880 550M728 555L650 683 645 730 618 790 618 830M715 580L815 622M700 603L800 657M680 640L788 692M655 680L773 725M832 586L762 760M648 730L859 795M633 766L825 828M618 827L660 830 740 855 775 858M530 625L650 683M588 652L540 930M527 625L485 600 472 625 460 682 448 740M292 579L337 612 370 650 432 730 468 765 503 795M370 650L297 722 266 752M200 562L275 638 242 664M166 592L297 722M137 755L236 683 266 752 283 790 320 832 432 730M165 830L266 756M180 862L283 788M182 872L292 795M195 895L320 832M507 830L398 902 358 855 468 765M217 948L370 870M238 998L398 902M262 1060L420 930 495 890M275 1132L537 942M323 1178L430 1080 480 1030 553 990M340 1200L430 1109 500 1045 562 1012M660 830L640 890 617 928 590 962 560 982M617 928L663 957M590 962L620 1000"/>
<path transform="translate(0 720)" d="M517 110L558 168 633 127M497 215L558 168M442 147L470 190 497 215 510 240 512 260 495 325 482 385M442 147L425 160 450 267M371 203L435 203M371 274L450 267 510 247 648 165M435 268L420 392M371 344L425 346M369 391L482 391M493 325L668 220M482 385L540 350 690 262M535 356L607 395 640 365 707 330M482 385L513 495 558 557M422 392L405 550M440 392L422 520M460 392L440 500M485 405L465 475 405 550 390 570 352 568M405 578L507 482M437 617L530 522M472 648L558 557 668 475 692 512 728 490M390 570L472 648M450 672L462 690 690 505M383 570L377 672M345 688L400 672 445 630M338 714L400 700 450 672 472 648M510 655L540 682 685 558M692 512L667 537 715 592M555 668L592 700M367 712L440 828M565 737L605 778 635 812 607 848 647 893 645 990M605 778L512 853 418 930 385 877M605 778L712 693M647 893L712 835M512 853L570 950 645 990 685 1010M543 910L605 850M767 458L787 442 840 505M930 445L942 462 928 565M865 516L905 575 990 540M905 575L930 618 988 585M738 690L890 560M738 722L905 588M738 768L918 612M740 825L940 640M930 618L968 675 850 790 940 887 972 868 1030 940M998 512L1048 560M955 690L1072 845M933 710L1060 880M938 708L1065 878M905 738L1040 920M1060 720L1088 715M1075 790L1113 783M1050 682L1080 678M1062 905L1085 935 1090 922M750 820L790 858 850 790M790 858L725 970M735 830L770 842 768 885M738 840L748 910 725 960M837 827L858 805 877 820 855 842zM808 858l10-6 2-6 10 6 2 10 4 4-6 4-2 8-8-2-6 4 2-8zM725 970L875 820M722 1010L897 848M1058 375L1052 440 1050 560 1074 675M750 430L752 520 745 580"/>
<path transform="translate(0 1500)" d="M357 270L530 108M347 318L543 132M370 330L557 152M795 243L930 103M795 243L897 345M745 292L795 243M857 302L980 205M880 322L968 240M290 279L352 282M418 150L385 200 357 270 347 318 265 388M347 318L380 340 383 355 405 362 390 447 343 503M643 212L540 325M390 440L530 314 570 350 430 484 390 447M540 325L400 450M141 385L200 390 250 402M118 445L205 483M245 432L300 470 275 492 225 545 185 615 158 655M290 485L400 575 443 660M300 470L420 560 480 650M363 482L460 560 515 637M275 492L413 672M260 510L395 682M240 528L375 695M225 545L355 712M205 578L338 730M183 615L315 765M240 765L282 730M290 826L315 765 375 695 413 672 560 622 605 642M415 675L423 705 600 640M515 637L525 665M517 675L522 700M423 705L420 720M483 438L612 620M492 430L627 605M520 403L658 582M540 385L585 440 640 517 675 490 690 510M585 440L697 335M622 408L690 490M670 365L695 385M688 563L600 632M712 405L765 462 830 527M710 466L762 466 777 475 747 552 706 552M765 510L810 555M757 530L795 575M747 552L775 592 704 592M905 350L972 415 950 438 985 470M940 292L1067 405M970 258L1085 362M980 205L1108 320M1015 185L1120 290M1000 345L1055 280M972 415L1010 452M1100 268L1080 290 1108 315M1028 335l8-6 6 6-8 8zM850 420L885 452 963 478 1020 445 1066 440M920 472L965 450"/>
<path class="gap" d="M653 850L693 950 715 1000 742 1063 749 1109 757 1145 748 1300 740 1340 735 1480 728 1560 723 1680 720 1762 845 1902 845 1918 719 1785 715 1900 705 2060 698 2182 684 2170 690 2060 700 1850 705 1762 686 1736 708 1700 712 1620 715 1520 710 1480 710 1410 720 1380 725 1310 730 1200 733 1098 697 1010 685 960 640 860z"/>
<path d="M568 643L693 950 715 1000 742 1063 749 1109 757 1145 748 1300 740 1340 735 1480 728 1560 723 1680 720 1762 845 1902M845 1918L719 1785 715 1900 705 2060 698 2182M684 2170L690 2060 700 1850 705 1762 686 1736 708 1700 712 1620 715 1520 710 1480 710 1410 720 1380 725 1310 730 1200 733 1098 697 1010 685 960 640 860 597 786"/>
<path class="edge" d="M1005 627L995 680 985 740 985 790 992 830 978 888 1025 940 1045 1000 1057 1065M1098 830L1070 890 1028 940M1304 840L1270 858 1220 862 1180 885 1148 925 1145 960 1135 980 1105 1000 1088 1030 1076 1056M1058 1070L930 1160 865 1236 840 1228 750 1300M723 1315L640 1375 560 1455 440 1548 385 1595 332 1615M1055 1080L1020 1115 1000 1160 995 1230 990 1310 995 1345 1025 1385 1030 1415 1050 1417 1055 1455 1068 1490 1080 1540 1075 1570 1045 1645 1010 1685 975 1710 970 1740 945 1790 905 1830 903 1850 855 1855 847 1870 848 1908M316 1645L290 1790 262 1890 240 1930 205 1990 150 2100 145 2124M752 1120L762 1150 765 1185 760 1230 755 1300"/>
<path class="edge wider" d="M978 888L1025 940 1045 1000 1057 1068"/>
<path class="white" d="M1005 627L995 680 985 740 985 790 992 830 978 888 1025 940 1045 1000 1057 1065M1098 830L1070 890 1028 940M1304 840L1270 858 1220 862 1180 885 1148 925 1145 960 1135 980 1105 1000 1088 1030 1076 1056M1058 1070L930 1160 865 1236 840 1228 740 1308M723 1315L640 1375 560 1455 440 1548 385 1595 332 1615M1055 1080L1020 1115 1000 1160 995 1230 990 1310 995 1345 1025 1385 1030 1415 1050 1417 1055 1455 1068 1490 1080 1540 1075 1570 1045 1645 1010 1685 975 1710 970 1740 945 1790 905 1830 903 1850 855 1855 847 1870 848 1908M316 1645L290 1790 262 1890 240 1930 205 1990 150 2100 145 2124M752 1120L762 1150 765 1185 760 1230 755 1300"/>
<path class="white wide" d="M978 888L1025 940 1045 1000 1057 1070"/>
</g>
</svg>
</section>

<aside class="dock right">
  <header><h2>Processing Toolbox</h2><button aria-label="Float"><svg><use href="#flt"/></svg></button><button aria-label="Close panel"><svg><use href="#cls"/></svg></button></header>
  <div class="tools"><button aria-label="Models"><svg><use href="#gears"/></svg></button><button aria-label="R scripts"><svg><use href="#rd"/></svg></button><button aria-label="Python scripts"><svg><use href="#pyd"/></svg></button><button aria-label="History"><svg><use href="#clock"/></svg></button><button aria-label="Results"><svg><use href="#log"/></svg></button><i></i><button aria-label="Edit in place"><svg><use href="#edin"/></svg></button><i></i><button aria-label="Options"><svg><use href="#wren"/></svg></button></div>
  <label class="search"><svg><use href="#sea"/></svg><input type="text" aria-label="Search" placeholder="Search..."></label>
  <ul class="tree">
    <li><svg><use href="#clock"/></svg>Recently used</li>
    <li><svg><use href="#q"/></svg>Cartography</li>
    <li><svg><use href="#q"/></svg>Database</li>
    <li><svg><use href="#q"/></svg>File tools</li>
    <li><svg><use href="#q"/></svg>Graphics</li>
    <li><svg><use href="#q"/></svg>Interpolation</li>
    <li><svg><use href="#q"/></svg>Layer tools</li>
    <li><svg><use href="#q"/></svg>Network analysis</li>
    <li><svg><use href="#q"/></svg>Raster analysis</li>
    <li><svg><use href="#q"/></svg>Raster terrain analysis</li>
    <li><svg><use href="#q"/></svg>Raster tools</li>
    <li><svg><use href="#q"/></svg>Vector analysis</li>
    <li><svg><use href="#q"/></svg>Vector creation</li>
    <li><svg><use href="#q"/></svg>Vector general</li>
    <li><svg><use href="#q"/></svg>Vector geometry</li>
    <li><svg><use href="#q"/></svg>Vector overlay</li>
    <li><svg><use href="#q"/></svg>Vector selection</li>
    <li><svg><use href="#q"/></svg>Vector table</li>
    <li><svg><use href="#plot"/></svg>DataPlotly</li>
    <li><svg><use href="#gdal"/></svg>GDAL</li>
    <li><svg><use href="#gras"/></svg>GRASS</li>
    <li><svg><use href="#r"/></svg>R</li>
    <li><svg><use href="#saga"/></svg>SAGA</li>
    <li><svg><use href="#py"/></svg>Scripts</li>
  </ul>
</aside>
</main>

<footer>
  <label class="locate"><svg><use href="#sea"/></svg><input type="text" aria-label="Locate" placeholder="Type to locate (Ctrl+K)"></label>
  <output>1 legend entries removed.</output>
  <label for="coord">Coordinate</label><input class="field" id="coord" value="2352605,5093379"><svg class="ms"><use href="#mouse"/></svg>
  <label for="scale">Scale</label><span class="combo w81"><select id="scale"><option>1:8472</option></select></span><svg class="lk"><use href="#lock"/></svg>
  <label for="magf">Magnifier</label><span class="spin w87"><input id="magf" value="100%"><i></i></span>
  <label for="rota" class="rl">Rotation</label><span class="spin w83"><input id="rota" value="0.0 °"><i></i></span>
  <label class="render"><input type="checkbox" checked>Render</label>
  <button class="epsg"><svg><use href="#gglobe"/></svg>EPSG:3004</button>
  <button aria-label="Messages" class="msg"><svg><use href="#bub"/></svg></button>
</footer>

<div class="recorder" role="dialog" aria-label="ScreenToGif">
  <div class="rtop"><span>ScreenToGif</span><button aria-label="Close recorder"><svg viewBox="0 0 18 18" width="18" height="18"><path d="M1 1l16 16M17 1L1 17" stroke="#222" stroke-width="1.500"/></svg></button></div>
  <div class="rrow">
    <button aria-label="Recorder options"><svg viewBox="0 0 18 22" width="18" height="22"><g fill="none" stroke="#8a8a8a"><circle cx="12.500" cy="6" r="3" stroke-width="2.500"/><circle cx="12.500" cy="6" r="4.700" stroke-width="1.500" stroke-dasharray="2 1.700"/><circle cx="6" cy="15" r="3.500" stroke-width="3"/><circle cx="6" cy="15" r="5.300" stroke-width="1.500" stroke-dasharray="2 1.700"/></g></svg></button>
    <svg viewBox="0 0 30 30" width="30" height="30"><circle cx="15" cy="15" r="13.500" fill="#fff" stroke="#d68a6a" stroke-width="1.500"/><path d="M15 15V3a12 12 0 1 1-12 12z" fill="#d68a6a"/><path d="M15 1.500A13.500 13.500 0 0 0 1.500 15" stroke="#888" fill="none" stroke-width="1.500"/></svg>
    <label class="fps"><input type="text" value="15" aria-label="Frames per second"><s></s></label><span>f/s</span>
    <div class="rctl"><button aria-label="Pause"><svg viewBox="0 0 16 20" width="16" height="20"><path d="M0 0h6v20H0zM10 0h6v20h-6z" fill="#3579bd"/></svg></button><button aria-label="Stop"><svg viewBox="0 0 20 20" width="20" height="20"><path d="M0 0h20v20H0z" fill="#3579bd"/></svg></button></div>
  </div>
  <svg class="pointer" viewBox="0 0 12 19" width="12" height="19"><path d="M1 1v14l3-3 2.500 6 2.500-1-2.500-5.500H11z" fill="#fff" stroke="#111"/></svg>
</div>
</body>
</html>
```
FILE: styles.css
```css
* { box-sizing: border-box; }
body {
  margin: 0;
  height: 100vh;
  overflow: hidden;
  display: flex;
  flex-direction: column;
  position: relative;
  background: #f0f0f0;
  color: #000;
  font: 11px/18px "Open Sans", "Noto Sans", sans-serif;
}
button, input, select { font: inherit; color: inherit; margin: 0; }
button { border: 0; padding: 0; background: none; }
h1, h2 { margin: 0; font-weight: 400; }
ul { list-style: none; margin: 0; padding: 0; }
.paints { position: absolute; width: 0; height: 0; }
.defs { display: none; }

.titlebar { height: 19px; flex: none; display: flex; align-items: flex-start; background: #e9ebea; border-bottom: 1px solid #d8d8d8; }
.titlebar h1 { flex: 1; text-align: center; font-size: 14px; line-height: 15px; color: #222; }
.logo { width: 16px; height: 16px; margin-right: 82px; }
.winbtns { display: flex; }
.winbtns button { width: 26px; height: 15px; display: flex; align-items: center; justify-content: center; }
.winbtns .close { width: 45px; margin-left: 1px; background: #bcbcbc; }

.menubar { height: 20px; flex: none; display: flex; align-items: center; gap: 1px; border-bottom: 1px solid #d8d8d8; }
.menubar button { padding: 0 7px; color: #999b9b; line-height: 18px; }
.menubar u { text-underline-offset: 2px; }

.toolbar { height: 39px; flex: none; display: flex; align-items: center; border-bottom: 1px solid #b6b6b6; background: linear-gradient(#fcfcfc, #efefef); overflow: hidden; }
.toolbar.low { height: 35px; padding-top: 1px; }
.toolbar button { flex: none; width: 33px; height: 31px; display: flex; align-items: center; justify-content: center; position: relative; }
.toolbar button svg { width: 24px; height: 24px; }
.toolbar .off svg { filter: grayscale(1); opacity: .38; }
.toolbar .half svg { opacity: .8; }
.toolbar .on { width: 31px; margin: 0 1px; background: #dcdcdc; border: 1px solid #a8a8a8; border-radius: 2px; }
.grip { flex: none; width: 4px; height: 17px; margin: 0 3px 0 9px; background: radial-gradient(circle, #b4b4b4 1px, transparent 1px) 0 0 / 2px 3px; }
.grip:first-child { margin: 0 4px 0 2px; }
.toolbar .drop { width: 45px; justify-content: flex-start; padding-left: 4px; }
.drop::after { content: ""; width: 0; height: 0; margin-left: 6px; border: 4px solid transparent; border-top-color: #555; border-bottom: 0; }
.off.drop::after { border-top-color: #aaa; }
.mini::after { content: ""; position: absolute; right: 2px; bottom: 3px; border: 3px solid transparent; border-top-color: #aaa; border-bottom: 0; }

.spin, .combo { flex: none; display: flex; height: 20px; margin-right: 1px; border: 1px solid #aeaeae; border-radius: 2px; background: #fff; position: relative; }
.combo { margin-right: 2px; }
.spin input { flex: 1; min-width: 0; border: 0; padding: 0 3px; background: none; outline: 0; }
.spin i { flex: none; width: 14px; display: flex; flex-direction: column; align-items: center; justify-content: center; gap: 3px; border-left: 1px solid #ccc; background: #f6f6f6; }
.spin i::before, .spin i::after { content: ""; border: 4px solid transparent; }
.spin i::before { border-top: 0; border-bottom-color: #555; }
.spin i::after { border-bottom: 0; border-top-color: #555; }
.combo select { flex: 1; width: 100%; border: 0; padding: 0 3px; background: none; appearance: none; outline: 0; opacity: 1; }
.combo::after { content: ""; position: absolute; right: 6px; top: 7px; border: 4px solid transparent; border-top: 5px solid #555; border-bottom: 0; }
.combo::before { content: ""; position: absolute; right: 19px; top: 0; bottom: 0; border-left: 1px solid #ccc; }
.dis { background: #f0f0f0; color: #888; }
.dis i { filter: opacity(.6); }
.dis.combo::before { display: none; }
.dis.combo::after { border-top-color: #999; }
.w50 { width: 50px; } .w60 { width: 60px; } .w62 { width: 62px; } .w79 { width: 79px; } .w80 { width: 80px; } .w81 { width: 81px; }
.w83 { width: 83px; } .w87 { width: 87px; } .w100 { width: 100px; }
.toolbar .pill { height: 20px; margin-right: 1px; padding-left: 19px; justify-content: flex-start; color: #fff; background: radial-gradient(circle at 7px 10px, #ccc 2px, #000 3px, #000 6px, transparent 7px), linear-gradient(90deg, #333, #9a9a9a); }
.toolbar .w59 { width: 59px; }
.toolbar .w66 { width: 66px; }
.tag { flex: none; height: 20px; margin-right: 1px; padding-left: 1px; background: #4d4d4d; color: #fff; font-weight: 700; white-space: nowrap; }
.w10 { width: 10px; } .w23 { width: 23px; } .w25 { width: 25px; } .w27 { width: 27px; }

main { flex: 1; min-height: 0; display: grid; grid-template-columns: 555px minmax(0, 1fr) 462px; gap: 6px; padding-top: 1px; }
.left { display: flex; flex-direction: column; min-height: 0; }
.dock { display: flex; flex-direction: column; min-height: 0; }
.browser { flex: 0 0 50%; }
.layers { flex: 1; }
.hsplit { flex: none; height: 6px; background: radial-gradient(circle, #aaa 1px, transparent 1px) center / 3px 3px; width: 17px; align-self: center; }
.dock header { height: 22px; flex: none; display: flex; align-items: center; gap: 2px; padding: 0 1px 0 2px; }
.dock h2 { flex: 1; font-size: 14px; line-height: 20px; }
.dock header button, .dock header svg { width: 12px; height: 12px; display: block; }
.tools { height: 24px; flex: none; margin-bottom: 4px; display: flex; align-items: center; }
.tools button { width: 25px; height: 22px; display: flex; align-items: center; padding-left: 5px; }
.tools svg { width: 16px; height: 16px; flex: none; }
.tools .drop { width: 37px; }
.tools i { width: 1px; height: 12px; margin: 0 3px; background: #ccc; }
.pane { flex: 1; min-height: 0; display: flex; border: 1px solid #b2b2b2; border-left: 0; background: #fff; overflow: hidden; }
.tree { flex: 1; padding-top: 1px; overflow: hidden; }
.tree li { height: 18px; display: flex; align-items: center; padding-left: 6px; white-space: nowrap; }
.tree li::before { content: ""; flex: none; width: 15px; height: 8px; background: #555; clip-path: polygon(0 0, 4px 50%, 0 100%); }
.tree .leaf::before { visibility: hidden; }
.tree svg { flex: none; width: 16px; height: 16px; margin-right: 6px; }
.layers .tree { padding-top: 0; }
.layers .tree input, .render input { appearance: none; flex: none; width: 14px; height: 14px; margin: 0 6px 0 0; border: 1px solid #aaa; background: #fff; }
.layers .tree input:checked, .render input:checked { background: #fff url("data:image/svg+xml,%3Csvg xmlns='http://www.w3.org/2000/svg' viewBox='0 0 12 12'%3E%3Cpath d='M2.500 5l2.500 4.500L9.500 1.500' fill='none' stroke='%23000' stroke-width='1.800'/%3E%3C/svg%3E"); }
.swatch { width: 16px; height: 16px; margin-right: 6px; background: #895f6c; border: 1px solid #4b4f72; }
.cur { background: #efefef; }
.cur label { font-weight: 700; text-decoration: underline; }
.scroll { flex: none; width: 15px; display: flex; flex-direction: column; border-left: 1px solid #b2b2b2; background: #e4e4e4; }
.scroll b { height: 14px; flex: none; display: flex; align-items: center; justify-content: center; background: #fbfbfb; }
.scroll b::before { content: ""; border: 4px solid transparent; }
.scroll .up { border-bottom: 1px solid #b2b2b2; }
.scroll .up::before { border-top: 0; border-bottom-color: #444; }
.scroll .down { margin-top: auto; border-top: 1px solid #b2b2b2; }
.scroll .down::before { border-bottom: 0; border-top-color: #444; }
.scroll span { height: 80%; border-bottom: 1px solid #b2b2b2; background: linear-gradient(90deg, #fff, #f2f2f2); }

.canvas { border: 1px solid #b2b2b2; background: #fff; min-width: 0; min-height: 0; display: flex; }
.canvas svg { width: 100%; height: 100%; }
.map path { fill: none; stroke: #2b2323; stroke-width: 3; stroke-linejoin: round; }
.map .land { fill: #b6494b; }
.map .gap { fill: #fff; stroke: none; }
.map .edge { stroke-width: 8; }
.map .wider { stroke-width: 11; }
.map .white { stroke: #fff; stroke-width: 3; }
.map .wide { stroke-width: 6; }

.dock.right header { padding: 0 0 0 5px; }
.right .tools { padding-left: 3px; }
.search { height: 22px; flex: none; display: flex; align-items: center; gap: 8px; padding-left: 8px; border: 1px solid #aaa; border-right: 0; border-radius: 2px 0 0 2px; background: #fff; }
.search svg, .locate svg { flex: none; width: 12px; height: 12px; }
.search input, .locate input { border: 0; outline: 0; padding: 0; flex: 1; min-width: 0; background: none; }
input::placeholder { color: #808080; opacity: 1; }
.right .tree { border: 1px solid #b2b2b2; border-right: 0; background: #fff; }
.right .tree li { padding-left: 8px; }

footer { height: 26px; flex: none; display: flex; align-items: center; padding: 2px 5px 0 2px; white-space: nowrap; }
.locate { width: 199px; height: 22px; display: flex; align-items: center; gap: 7px; padding-left: 8px; border: 1px solid #999; border-radius: 2px; background: #fff; }
footer output { flex: 1; margin-left: 9px; }
footer svg { flex: none; width: 16px; height: 16px; }
.field { width: 98px; height: 21px; margin-left: 4px; padding: 0 2px; border: 1px solid #aaa; border-radius: 2px; background: #fff; outline: 0; }
.ms { margin: 0 10px 0 4px; }
footer .combo, footer .spin { height: 21px; margin: 0 0 0 4px; }
.lk { margin: 0 4px 0 8px; }
.rl { margin-left: 9px; }
.rl + .spin { margin-left: 7px; }
.render { display: flex; align-items: center; margin-left: 9px; }
.render input { width: 13px; height: 13px; margin-right: 4px; }
.epsg { display: flex; align-items: center; gap: 3px; margin-left: 14px; }
.msg { display: flex; margin-left: 18px; }

.recorder { position: absolute; top: 117px; right: 41px; width: 185px; height: 65px; padding: 2px 0 0 2px; background: #fff; border: 1px solid #bbb; }
.rtop { height: 27px; display: flex; align-items: center; justify-content: space-between; padding-right: 6px; color: #0a57a0; }
.rtop button { display: flex; }
.rrow { display: flex; align-items: center; height: 33px; gap: 4px; padding-left: 2px; font-size: 12px; color: #444; }
.rrow > svg { flex: none; }
.rrow > button { display: flex; }
.fps { width: 45px; height: 26px; flex: none; display: flex; align-items: center; padding: 0 0 0 4px; border: 1px solid #aaa; }
.fps input { width: 18px; border: 0; padding: 0; outline: 0; }
.fps s { width: 20px; height: 1px; background: #9cc4d8; }
.rctl { flex: none; display: flex; align-items: center; gap: 9px; width: 52px; height: 33px; margin-left: auto; padding-left: 4px; background: #d9e2ed; }
.rctl button { display: flex; }
.pointer { position: absolute; right: 3px; bottom: -4px; }
```
